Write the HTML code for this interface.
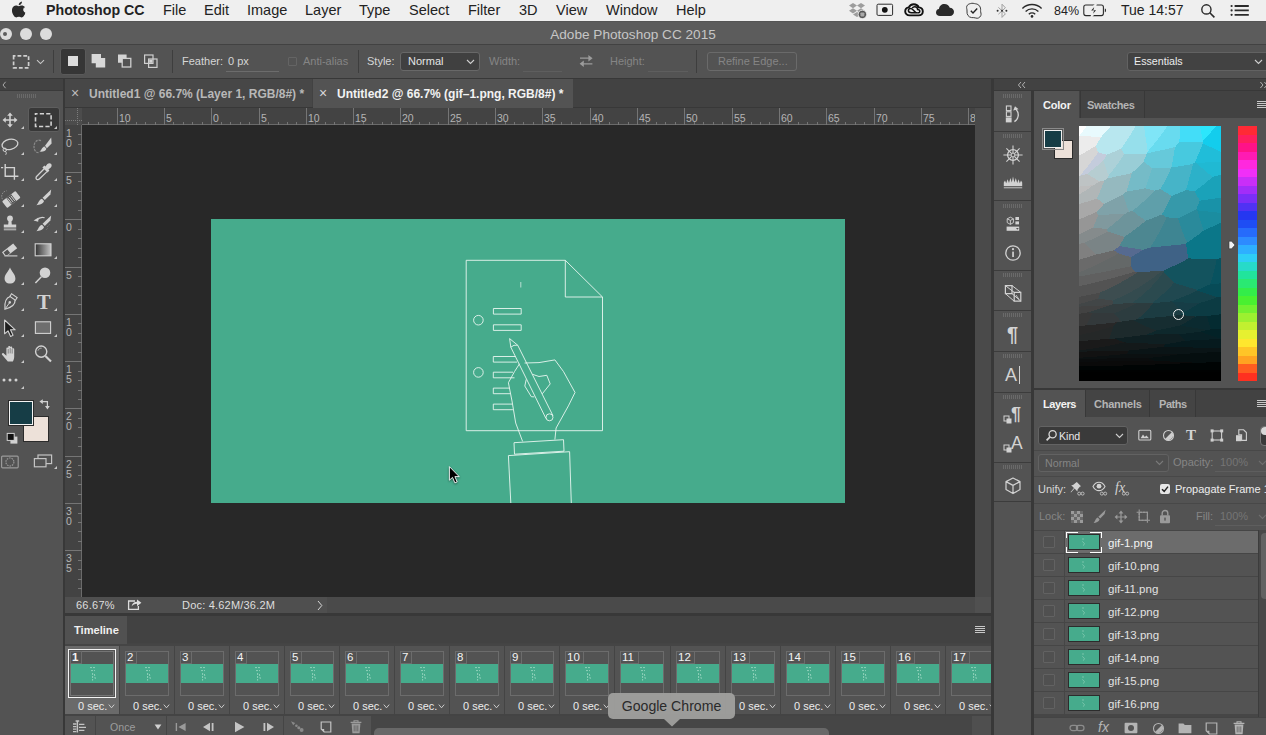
<!DOCTYPE html>
<html><head><meta charset="utf-8"><title>Adobe Photoshop CC 2015</title>
<style>
html,body{margin:0;padding:0}
body{width:1266px;height:735px;overflow:hidden;position:relative;background:#535353;font-family:"Liberation Sans",sans-serif;color:#ddd;font-size:11px}
.a{position:absolute;white-space:nowrap}
.b{position:absolute;box-sizing:border-box}
svg{position:absolute;overflow:visible}
.mi{position:absolute;top:1px;font-size:15px;color:#222;line-height:18px;white-space:nowrap}
.t11{font-size:11px;line-height:13px}
</style></head><body>
<div class="b" style="left:0;top:0;width:1266px;height:22px;background:#efefef;border-bottom:1px solid #555"></div>
<div class="mi" style="left:46px;font-weight:bold;font-size:14.2px;">Photoshop CC</div>
<div class="mi" style="left:163px;font-size:14.5px;">File</div>
<div class="mi" style="left:204px;font-size:14.5px;">Edit</div>
<div class="mi" style="left:247px;font-size:14.5px;">Image</div>
<div class="mi" style="left:305px;font-size:14.5px;">Layer</div>
<div class="mi" style="left:359px;font-size:14.5px;">Type</div>
<div class="mi" style="left:409px;font-size:14.5px;">Select</div>
<div class="mi" style="left:468px;font-size:14.5px;">Filter</div>
<div class="mi" style="left:519px;font-size:14.5px;">3D</div>
<div class="mi" style="left:556px;font-size:14.5px;">View</div>
<div class="mi" style="left:606px;font-size:14.5px;">Window</div>
<div class="mi" style="left:676px;font-size:14.5px;">Help</div>
<div class="mi" style="left:1054px;font-size:12.5px;top:2px">84%</div>
<div class="mi" style="left:1121px;font-size:14px">Tue 14:57</div>
<div class="b" style="left:0;top:22px;width:1266px;height:23px;background:#5c5c5c;border-bottom:1px solid #424242"></div>
<div class="a" style="left:0;width:1266px;text-align:center;top:27px;font-size:13.6px;line-height:16px;color:#c6c6c6">Adobe Photoshop CC 2015</div>
<div class="b" style="left:0px;top:28px;width:12px;height:12px;border-radius:6px;background:#dcdcdc"></div>
<div class="b" style="left:20px;top:28px;width:12px;height:12px;border-radius:6px;background:#dcdcdc"></div>
<div class="b" style="left:40px;top:28px;width:12px;height:12px;border-radius:6px;background:#dcdcdc"></div>
<div class="b" style="left:3px;top:32px;width:4px;height:4px;border-radius:2px;background:#5c5c5c"></div>
<div class="b" style="left:0;top:45px;width:1266px;height:34px;background:#535353;border-bottom:1px solid #383838"></div>
<div class="b" style="left:0;top:79px;width:1266px;height:656px;background:#383838"></div><svg style="left:12px;top:1px" width="15" height="17" viewBox="0 0 16 18"><path d="M10.6 0.4C10.7 1.5 10.3 2.5 9.7 3.2C9.1 3.9 8.1 4.5 7.2 4.4C7.1 3.4 7.6 2.4 8.1 1.8C8.8 1 9.8 0.5 10.6 0.4Z" fill="#2a2a2a"/><path d="M13.6 6.4C12.6 7 12 8 12 9.2C12 10.6 12.9 11.8 14.2 12.3C13.9 13.2 13.5 14 13 14.8C12.3 15.9 11.5 17 10.3 17C9.2 17 8.8 16.3 7.5 16.3C6.2 16.3 5.7 17 4.7 17C3.5 17 2.6 15.8 1.9 14.7C0.4 12.400 0.200 9.6 1.200 8C1.900 6.800 3.100 6.100 4.300 6.100C5.500 6.100 6.300 6.800 7.300 6.800C8.300 6.800 8.900 6.100 10.300 6.100C11.400 6.100 12.500 6.700 13.300 7.600" fill="#2a2a2a"/><path d="M13.6 6.4C12.8 5.400 11.600 4.800 10.500 4.800C9 4.800 8.300 5.500 7.300 5.500C6.200 5.500 5.400 4.800 4.100 4.800C2.900 4.800 1.500 5.600 0.700 6.900C-0.500 8.800 -0.300 12.300 1.600 15.200C2.300 16.200 3.200 17.400 4.400 17.400C5.500 17.400 5.800 16.700 7.300 16.700C8.800 16.700 9 17.400 10.100 17.400C11.300 17.400 12.300 16.100 13 15.100C13.500 14.300 13.700 13.900 14.100 13C11.100 11.900 10.600 7.700 13.600 6.400Z" fill="#2a2a2a"/></svg>
<svg style="left:848px;top:2px" width="20" height="18" viewBox="0 0 20 18"><path d="M5 1L9 3.6L5 6.200L1 3.600ZM13 1L17 3.600L13 6.200L9 3.600ZM5 6.200L9 8.800L5 11.400L1 8.800ZM13 6.200L17 8.800L13 11.400L9 8.800ZM5 12.400L9 9.900L13 12.400L9 15Z" fill="#9c9c9c"/><circle cx="14.4" cy="12.4" r="4.2" fill="#545454" stroke="#efefef" stroke-width="0.8"/><rect x="12.4" y="10.4" width="4" height="4" rx="0.8" fill="#a8a8a8"/></svg>
<svg style="left:876px;top:3px" width="18" height="14" viewBox="0 0 18 14"><rect x="1" y="1.2" width="15.6" height="11.2" rx="1.2" fill="none" stroke="#2a2a2a" stroke-width="1"/><circle cx="8.800" cy="6.800" r="2.900" fill="#111"/></svg>
<svg style="left:904px;top:3px" width="20" height="14" viewBox="0 0 20 14"><path d="M5.600 12.400C2.800 12.400 1.200 10.400 1.200 8.400C1.200 6.200 2.800 4.600 4.800 4.400C5.600 2.400 7.600 1.200 9.800 1.200C12.200 1.200 14 2.600 14.800 4.400C17.200 4.600 18.800 6.400 18.800 8.400C18.800 10.600 17.200 12.400 14.600 12.400Z" fill="none" stroke="#111" stroke-width="1.900"/><path d="M13.800 9.800H7.400C5.400 9.800 4.400 8.800 4.400 7.600C4.400 6.400 5.400 5.600 6.600 5.600C7.600 5.600 8.400 6.200 9.200 7L11.800 9.600" fill="none" stroke="#111" stroke-width="1.500"/><path d="M8.200 5.200C8.800 4.200 9.800 3.800 10.800 3.800C12.400 3.800 13.600 5 13.600 6.400C14.800 6.400 15.800 7.200 15.800 8.200C15.800 9.200 15 9.800 13.800 9.800" fill="none" stroke="#111" stroke-width="1.500"/></svg>
<svg style="left:935px;top:3px" width="20" height="14" viewBox="0 0 20 14"><path d="M5 13C2.600 13 1 11.400 1 9.400C1 7.600 2.200 6.200 4 6C4.200 3 6.600 1 9.400 1C12 1 14 2.600 14.800 4.800C17.200 4.800 19 6.600 19 8.800C19 11.200 17.200 13 15 13Z" fill="#2a2a2a"/></svg>
<svg style="left:965px;top:2px" width="18" height="18" viewBox="0 0 18 18"><path d="M5.400 1.600C7.400 0.800 9 1.600 10.600 1.800C14 2.200 16 5 15.600 8.600C15.400 10.200 16.600 11.800 15.800 13.600C14.800 15.800 12.600 16.800 10.800 16C9.400 15.400 8.200 15.800 6.600 15.600C3.400 15.200 1.600 12.400 2 9C2.200 7.400 1.200 6 1.800 4.200C2.400 2.600 3.800 2 5.400 1.600Z" fill="none" stroke="#3a3a3a" stroke-width="1"/><path d="M5.800 8.800L8 11L12.200 6.600" fill="none" stroke="#222" stroke-width="1.400"/></svg>
<svg style="left:996px;top:2px" width="12" height="18" viewBox="0 0 12 18"><path d="M2.400 5.400L9.400 11.800L6 15.400V2.200L9.400 5.800L2.400 12.200" fill="none" stroke="#a0a0a0" stroke-width="1"/><circle cx="1.600" cy="8.800" r="1" fill="#333"/><circle cx="6" cy="8.800" r="1" fill="#333"/><circle cx="10.400" cy="8.800" r="1" fill="#333"/></svg>
<svg style="left:1021px;top:3px" width="22" height="15" viewBox="0 0 22 15"><path d="M1.400 5.400C6.800 0.200 15.200 0.200 20.600 5.400" fill="none" stroke="#2a2a2a" stroke-width="1.400"/><path d="M4.600 8.400C8.200 5 13.800 5 17.400 8.400" fill="none" stroke="#2a2a2a" stroke-width="1.400"/><path d="M7.800 11.200C9.600 9.600 12.400 9.600 14.200 11.200" fill="none" stroke="#2a2a2a" stroke-width="1.400"/><circle cx="11" cy="13.400" r="1.300" fill="#2a2a2a"/></svg>
<svg style="left:1083px;top:4px" width="24" height="13" viewBox="0 0 24 13"><rect x="0.800" y="1" width="19.600" height="10.600" rx="2" fill="none" stroke="#2a2a2a" stroke-width="1.100"/><path d="M21.800 4.400V8.200C22.800 8 23 7.400 23 6.300C23 5.200 22.800 4.600 21.800 4.400Z" fill="#2a2a2a"/><path d="M13.200-0.400L6.400 7.200H10L8.200 13L15 5.400H11.400Z" fill="#2a2a2a" stroke="#efefef" stroke-width="1.600"/></svg>
<svg style="left:1200px;top:3px" width="16" height="16" viewBox="0 0 16 16"><circle cx="6.400" cy="6.400" r="4.600" fill="none" stroke="#2a2a2a" stroke-width="1.400"/><path d="M9.800 9.800L14.400 14.400" stroke="#2a2a2a" stroke-width="1.600"/></svg>
<svg style="left:1230px;top:4px" width="20" height="13" viewBox="0 0 20 13"><path d="M4.600 2H18.800M4.600 6.400H18.800M4.600 10.800H18.800" stroke="#2a2a2a" stroke-width="1.800"/><circle cx="1.600" cy="2" r="1.100" fill="#2a2a2a"/><circle cx="1.600" cy="6.400" r="1.100" fill="#2a2a2a"/><circle cx="1.600" cy="10.800" r="1.100" fill="#2a2a2a"/></svg><svg style="left:12px;top:54px" width="20" height="16" viewBox="0 0 20 16"><rect x="1.6" y="1.8" width="15" height="12" fill="none" stroke="#cfcfcf" stroke-width="1.7" stroke-dasharray="3.8 2" stroke-dashoffset="1.9"/></svg>
<svg style="left:36px;top:59px" width="9" height="6" viewBox="0 0 9 6"><path d="M1 1.2L4.5 4.6L8 1.2" fill="none" stroke="#c8c8c8" stroke-width="1.1"/></svg>
<div class="b" style="left:53px;top:50px;width:1px;height:23px;background:#3e3e3e"></div>
<div class="b" style="left:172px;top:50px;width:1px;height:23px;background:#3e3e3e"></div>
<div class="b" style="left:358px;top:50px;width:1px;height:23px;background:#3e3e3e"></div>
<div class="b" style="left:696px;top:50px;width:1px;height:23px;background:#3e3e3e"></div>
<div class="b" style="left:60px;top:48px;width:26px;height:27px;background:#363636;border:1px solid #5a5a5a;border-radius:3px"></div>
<div class="b" style="left:68px;top:56px;width:10px;height:10px;background:#dcdcdc"></div>
<svg style="left:91px;top:53px" width="16" height="16" viewBox="0 0 16 16"><path d="M0.6 1H10V5H14.2V14.4H4.8V10.2H0.6Z" fill="#d8d8d8"/></svg>
<svg style="left:117px;top:53px" width="16" height="16" viewBox="0 0 16 16"><rect x="5.2" y="5.4" width="8.6" height="8.6" fill="none" stroke="#cfcfcf" stroke-width="1.3"/><path d="M1 1.4H9.6V5.4H5.2V9.8H1Z" fill="#d4d4d4"/></svg>
<svg style="left:143px;top:53px" width="16" height="16" viewBox="0 0 16 16"><rect x="1.6" y="2" width="8.4" height="8.4" fill="none" stroke="#cfcfcf" stroke-width="1.2"/><rect x="5.6" y="6" width="8.4" height="8.4" fill="none" stroke="#cfcfcf" stroke-width="1.2"/><rect x="6.2" y="6.6" width="3.2" height="3.2" fill="#d4d4d4"/></svg>
<div class="a" style="left:182px;top:55px;font-size:11px;line-height:13px;color:#d6d6d6;">Feather:</div>
<div class="a" style="left:228px;top:55px;font-size:11px;line-height:13px;color:#d6d6d6;">0 px</div>
<div class="b" style="left:226px;top:71px;width:53px;height:1px;background:#6c6c6c"></div>
<div class="b" style="left:288px;top:57px;width:9px;height:9px;border:1px solid #646464;border-radius:1px"></div>
<div class="a" style="left:303px;top:55px;font-size:11px;line-height:13px;color:#858585;">Anti-alias</div>
<div class="a" style="left:367px;top:55px;font-size:11px;line-height:13px;color:#d6d6d6;">Style:</div>
<div class="b" style="left:400px;top:52px;width:80px;height:19px;background:#404040;border:1px solid #686868;border-radius:3px"></div>
<div class="a" style="left:408px;top:55px;font-size:11px;line-height:13px;color:#e4e4e4;">Normal</div>
<svg style="left:466px;top:59px" width="9" height="6" viewBox="0 0 9 6"><path d="M1 1L4.5 4.4L8 1" fill="none" stroke="#cfcfcf" stroke-width="1.1"/></svg>
<div class="a" style="left:489px;top:55px;font-size:11px;line-height:13px;color:#858585;">Width:</div>
<div class="b" style="left:523px;top:71px;width:39px;height:1px;background:#5e5e5e"></div>
<svg style="left:578px;top:54px" width="16" height="14" viewBox="0 0 16 14"><path d="M2 4.2H11.4M14.4 9.8H4.8" stroke="#9c9c9c" stroke-width="1.3" fill="none"/><path d="M10.4 1L14.6 4.2L10.4 7.4Z M5.8 6.6L1.6 9.8L5.8 13Z" fill="#9c9c9c"/></svg>
<div class="a" style="left:610px;top:55px;font-size:11px;line-height:13px;color:#858585;">Height:</div>
<div class="b" style="left:648px;top:71px;width:40px;height:1px;background:#5e5e5e"></div>
<div class="b" style="left:707px;top:52px;width:90px;height:19px;border:1px solid #6a6a6a;border-radius:3px"></div>
<div class="a" style="left:718px;top:55px;font-size:11px;line-height:13px;color:#858585;">Refine Edge...</div>
<div class="b" style="left:1127px;top:52px;width:150px;height:19px;background:#424242;border:1px solid #626262;border-radius:3px"></div>
<div class="a" style="left:1134px;top:55px;font-size:11px;line-height:13px;color:#ececec;font-size:10.7px">Essentials</div>
<svg style="left:1254px;top:59px" width="9" height="6" viewBox="0 0 9 6"><path d="M1 1L4.5 4.4L8 1" fill="none" stroke="#cfcfcf" stroke-width="1.1"/></svg><div class="b" style="left:0;top:79px;width:63px;height:656px;background:#535353"></div>
<div class="b" style="left:0;top:79px;width:63px;height:12px;background:#424242;border-bottom:1px solid #3a3a3a"></div>
<svg style="left:2px;top:81px" width="5" height="8" viewBox="0 0 5 8"><path d="M3.6 0.8L1 4L3.6 7.2" stroke="#b5b5b5" stroke-width="0.9" fill="none"/></svg>
<svg style="left:17px;top:94px" width="20" height="4" shape-rendering="crispEdges"><rect x="0" y="0" width="1" height="4" fill="#6a6a6a"/><rect x="2" y="0" width="1" height="4" fill="#6a6a6a"/><rect x="4" y="0" width="1" height="4" fill="#6a6a6a"/><rect x="6" y="0" width="1" height="4" fill="#6a6a6a"/><rect x="8" y="0" width="1" height="4" fill="#6a6a6a"/><rect x="10" y="0" width="1" height="4" fill="#6a6a6a"/><rect x="12" y="0" width="1" height="4" fill="#6a6a6a"/><rect x="14" y="0" width="1" height="4" fill="#6a6a6a"/><rect x="16" y="0" width="1" height="4" fill="#6a6a6a"/><rect x="18" y="0" width="1" height="4" fill="#6a6a6a"/></svg>
<div class="b" style="left:28px;top:107px;width:32px;height:25px;background:#383838;border:1px solid #5e5e5e;border-radius:3px"></div>
<svg style="left:-2px;top:108px" width="24" height="24" viewBox="-12 -12 24 24" fill="none" stroke="none"><path transform="scale(.88)" d="M0-8.5L3.2-4.8H0.9V-0.9H4.8V-3.2L8.5 0L4.8 3.2V0.9H0.9V4.8H3.2L0 8.5L-3.2 4.8H-0.9V0.9H-4.8V3.2L-8.5 0L-4.8-3.2V-0.9H-0.9V-4.8H-3.2Z" fill="#d2d2d2"/></svg><svg style="left:21px;top:126px" width="3" height="3" viewBox="0 0 3 3"><path d="M3 0V3H0Z" fill="#c8c8c8"/></svg>
<svg style="left:31px;top:108px" width="24" height="24" viewBox="-12 -12 24 24" fill="none" stroke="none"><rect x="-7.5" y="-6.3" width="15.6" height="12.8" stroke="#d2d2d2" stroke-width="1.6" stroke-dasharray="4.2 2.2" stroke-dashoffset="2.1"/></svg><svg style="left:54px;top:126px" width="3" height="3" viewBox="0 0 3 3"><path d="M3 0V3H0Z" fill="#c8c8c8"/></svg>
<svg style="left:-2px;top:134px" width="24" height="24" viewBox="-12 -12 24 24" fill="none" stroke="none"><ellipse cx="0.3" cy="-1.6" rx="8" ry="5" transform="rotate(-12)" stroke="#d2d2d2" stroke-width="1.3"/><circle cx="-5.2" cy="3.8" r="1.7" stroke="#d2d2d2" stroke-width="1"/><path d="M-4.6 5.2C-3.4 6.6-3.6 8-4.4 8.8" stroke="#d2d2d2" stroke-width="1"/></svg><svg style="left:21px;top:152px" width="3" height="3" viewBox="0 0 3 3"><path d="M3 0V3H0Z" fill="#c8c8c8"/></svg>
<svg style="left:31px;top:134px" width="24" height="24" viewBox="-12 -12 24 24" fill="none" stroke="none"><path d="M-2-5.4C-6.6-7.2-9 -3-9 0.6C-9 4.6-6.8 7.2-3.4 6.4" stroke="#8a8a8a" stroke-width="1.2" stroke-dasharray="2.4 1"/><path d="M8.2-8.4L8.6-2.4L3.9 2.2L2-0.2Z" fill="#d2d2d2"/><path d="M1.6 0.6L3.4 2.8C3 5-0.6 6.2-3.6 5.6C-1.4 4.6-1.2 1.2 1.6 0.6Z" fill="#d2d2d2"/></svg><svg style="left:54px;top:152px" width="3" height="3" viewBox="0 0 3 3"><path d="M3 0V3H0Z" fill="#c8c8c8"/></svg>
<svg style="left:-2px;top:160px" width="24" height="24" viewBox="-12 -12 24 24" fill="none" stroke="none"><path d="M-4.8-8V4.2H8.4M-9-4.4H-6.800M-4.8-4.400H4.400V7.800" stroke="#d2d2d2" stroke-width="1.4"/><rect x="-5.2" y="-4.7" width="9.9" height="9.3" fill="#535353" stroke="none" opacity="0"/></svg><svg style="left:21px;top:178px" width="3" height="3" viewBox="0 0 3 3"><path d="M3 0V3H0Z" fill="#c8c8c8"/></svg>
<svg style="left:31px;top:160px" width="24" height="24" viewBox="-12 -12 24 24" fill="none" stroke="none"><path d="M1.2-3.2L-6.2 4.2C-7.4 5.4-7 6.6-6.4 7.2C-5.6 7.8-4.4 7.8-3.4 6.8L4 -0.4" stroke="#d2d2d2" stroke-width="1.3"/><path d="M-0.6-4.6L1.4-6.4L2.4-5.4L4.4-8C5.6-9.2 7.2-9 8-8.2C8.8-7.4 9-5.8 7.8-4.6L5.4-2.6L6.4-1.6L4.6 0.4Z" fill="#d2d2d2"/></svg><svg style="left:54px;top:178px" width="3" height="3" viewBox="0 0 3 3"><path d="M3 0V3H0Z" fill="#c8c8c8"/></svg>
<svg style="left:-2px;top:186px" width="24" height="24" viewBox="-12 -12 24 24" fill="none" stroke="none"><g transform="rotate(-38)"><rect x="-8.4" y="-2.2" width="17" height="8.4" rx="1" fill="#d2d2d2"/><rect x="-3" y="-2.2" width="6.2" height="8.4" fill="#535353"/><path d="M-2 -1.2V5.2M0 -1.2V5.2M2 -1.2V5.2" stroke="#d2d2d2" stroke-width="0.9"/></g><path d="M-7.6 1.2C-9.4-2.4-7.6-6.6-3.4-7.2" stroke="#8a8a8a" stroke-width="1" stroke-dasharray="1.6 1"/></svg><svg style="left:21px;top:204px" width="3" height="3" viewBox="0 0 3 3"><path d="M3 0V3H0Z" fill="#c8c8c8"/></svg>
<svg style="left:31px;top:186px" width="24" height="24" viewBox="-12 -12 24 24" fill="none" stroke="none"><path d="M8.2-8.6L7.4-3.6L1.8 2L-0.4-0.2Z" fill="#d2d2d2"/><path d="M-1 0.8L1 3C0.4 5.6-3.4 7-6.6 7.2C-4.4 5.4-4.2 1.6-1 0.8Z" fill="#d2d2d2"/></svg><svg style="left:54px;top:204px" width="3" height="3" viewBox="0 0 3 3"><path d="M3 0V3H0Z" fill="#c8c8c8"/></svg>
<svg style="left:-2px;top:212px" width="24" height="24" viewBox="-12 -12 24 24" fill="none" stroke="none"><circle cx="0" cy="-5.6" r="2.9" fill="#d2d2d2"/><path d="M-1.4-3.4H1.4L1.8 0.4H6.2V3.4H-6.2V0.4H-1.8Z" fill="#d2d2d2"/><rect x="-6.2" y="4.4" width="12.4" height="2" fill="#a8a8a8"/></svg><svg style="left:21px;top:230px" width="3" height="3" viewBox="0 0 3 3"><path d="M3 0V3H0Z" fill="#c8c8c8"/></svg>
<svg style="left:31px;top:212px" width="24" height="24" viewBox="-12 -12 24 24" fill="none" stroke="none"><path d="M8.2-8.6L7.4-3.6L1.8 2L-0.4-0.2Z" fill="#d2d2d2"/><path d="M-1 0.8L1 3C0.4 5.6-3.4 7-6.6 7.2C-4.4 5.4-4.2 1.6-1 0.8Z" fill="#d2d2d2"/><path d="M-6.4-3.6C-4-6.4-0.6-7 1.6-6.2" stroke="#d2d2d2" stroke-width="1.2"/><path d="M-9.4-3.4L-4.6-6.6L-4.8-2.2Z" fill="#d2d2d2"/><path d="M4.4 2.6L6.4 0.6M3.6 5.4L5 4" stroke="#9a9a9a" stroke-width="0.8" stroke-dasharray="1 1"/></svg><svg style="left:54px;top:230px" width="3" height="3" viewBox="0 0 3 3"><path d="M3 0V3H0Z" fill="#c8c8c8"/></svg>
<svg style="left:-2px;top:238px" width="24" height="24" viewBox="-12 -12 24 24" fill="none" stroke="none"><path d="M-8 2.2L3.2-6.6L7.2-1.8L-2.2 5.6H-5.6Z" fill="#d2d2d2"/><path d="M-6.4 2.4L-2.6-0.6L0.2 2.9L-2.6 5H-4.6Z" fill="#535353"/><path d="M-5.6 5.9H7.4" stroke="#d2d2d2" stroke-width="1.1"/></svg><svg style="left:21px;top:256px" width="3" height="3" viewBox="0 0 3 3"><path d="M3 0V3H0Z" fill="#c8c8c8"/></svg>
<svg style="left:31px;top:238px" width="24" height="24" viewBox="-12 -12 24 24" fill="none" stroke="none"><defs><linearGradient id="gt" x1="0" x2="1" y1="0" y2="0"><stop offset="0" stop-color="#333"/><stop offset="1" stop-color="#c4c4c4"/></linearGradient></defs><rect x="-7.8" y="-6.2" width="15.8" height="12" fill="url(#gt)" stroke="#d2d2d2" stroke-width="1.1"/></svg><svg style="left:54px;top:256px" width="3" height="3" viewBox="0 0 3 3"><path d="M3 0V3H0Z" fill="#c8c8c8"/></svg>
<svg style="left:-2px;top:264px" width="24" height="24" viewBox="-12 -12 24 24" fill="none" stroke="none"><path d="M0-8.4C1.6-4.4 5.4-1.4 5.4 2.4C5.4 5.6 3 7.6 0 7.6C-3 7.6-5.4 5.6-5.4 2.4C-5.4-1.4-1.6-4.4 0-8.4Z" fill="#d2d2d2"/></svg><svg style="left:21px;top:282px" width="3" height="3" viewBox="0 0 3 3"><path d="M3 0V3H0Z" fill="#c8c8c8"/></svg>
<svg style="left:31px;top:264px" width="24" height="24" viewBox="-12 -12 24 24" fill="none" stroke="none"><circle cx="2" cy="-3.2" r="5.3" fill="#d2d2d2"/><path d="M-1.6 0.8L-7.6 7" stroke="#d2d2d2" stroke-width="1.5"/></svg><svg style="left:54px;top:282px" width="3" height="3" viewBox="0 0 3 3"><path d="M3 0V3H0Z" fill="#c8c8c8"/></svg>
<svg style="left:-2px;top:290px" width="24" height="24" viewBox="-12 -12 24 24" fill="none" stroke="none"><g transform="rotate(35)"><path d="M-3.4-7.6H3.4V-4.6H-3.4Z" stroke="#d2d2d2" stroke-width="1.1"/><path d="M-3-4.6C-5.4-1.6-5.4 2.4 0 8.8C5.4 2.4 5.4-1.6 3-4.6" stroke="#d2d2d2" stroke-width="1.2"/><path d="M0 8V1.4" stroke="#d2d2d2" stroke-width="0.9"/><circle cx="0" cy="0.4" r="1.3" fill="#d2d2d2"/></g></svg><svg style="left:21px;top:308px" width="3" height="3" viewBox="0 0 3 3"><path d="M3 0V3H0Z" fill="#c8c8c8"/></svg>
<div class="a" style="left:37px;top:291px;font-family:'Liberation Serif',serif;font-size:20.5px;line-height:22px;color:#d2d2d2;font-weight:bold">T</div>
<svg style="left:31px;top:290px" width="24" height="24" viewBox="-12 -12 24 24" fill="none" stroke="none"></svg><svg style="left:54px;top:308px" width="3" height="3" viewBox="0 0 3 3"><path d="M3 0V3H0Z" fill="#c8c8c8"/></svg>
<svg style="left:-2px;top:316px" width="24" height="24" viewBox="-12 -12 24 24" fill="none" stroke="none"><path d="M-5.4-8V5.8L-2 2.8L0.6 8.4L3 7.3L0.5 1.8H5.2Z" fill="#1e1e1e" stroke="#d2d2d2" stroke-width="1.1" stroke-linejoin="round"/></svg><svg style="left:21px;top:334px" width="3" height="3" viewBox="0 0 3 3"><path d="M3 0V3H0Z" fill="#c8c8c8"/></svg>
<svg style="left:31px;top:316px" width="24" height="24" viewBox="-12 -12 24 24" fill="none" stroke="none"><rect x="-7.6" y="-6.2" width="15.2" height="11.6" fill="#6e6e6e" stroke="#d2d2d2" stroke-width="1.1"/></svg><svg style="left:54px;top:334px" width="3" height="3" viewBox="0 0 3 3"><path d="M3 0V3H0Z" fill="#c8c8c8"/></svg>
<svg style="left:-2px;top:342px" width="24" height="24" viewBox="-12 -12 24 24" fill="none" stroke="none"><path d="M-2.2 7.6C-4.4 5-6.6 2.4-8 0.8C-8.6-0.4-7.2-1.4-6.2-0.6L-3.6 1.8V-5.4C-3.6-6.8-1.8-6.8-1.8-5.4V-7C-1.8-8.4 0.2-8.4 0.2-7V-6.4C0.2-7.8 2.2-7.8 2.2-6.4V-4.8C2.2-6.2 4.2-6.2 4.2-4.8V2.4C4.2 4.6 3.6 6 2.8 7.6Z" fill="#d2d2d2"/><path d="M-1.8-5V-0.4M0.2-6V-0.6M2.2-5V-0.4" stroke="#535353" stroke-width="0.6"/></svg><svg style="left:21px;top:360px" width="3" height="3" viewBox="0 0 3 3"><path d="M3 0V3H0Z" fill="#c8c8c8"/></svg>
<svg style="left:31px;top:342px" width="24" height="24" viewBox="-12 -12 24 24" fill="none" stroke="none"><circle cx="-1.8" cy="-2.4" r="5.6" stroke="#d2d2d2" stroke-width="1.4"/><path d="M2.4 2L8 7.6" stroke="#d2d2d2" stroke-width="2.1"/><path d="M-5-3.4C-4.4-5.2-2.8-6-1.4-5.8" stroke="#d2d2d2" stroke-width="0.8"/></svg>
<svg style="left:-2px;top:368px" width="24" height="24" viewBox="-12 -12 24 24" fill="none" stroke="none"><circle cx="-6" cy="0" r="1.5" fill="#d2d2d2"/><circle cx="0" cy="0" r="1.5" fill="#d2d2d2"/><circle cx="6" cy="0" r="1.5" fill="#d2d2d2"/></svg><svg style="left:21px;top:386px" width="3" height="3" viewBox="0 0 3 3"><path d="M3 0V3H0Z" fill="#c8c8c8"/></svg>
<div class="b" style="left:23px;top:416px;width:26px;height:26px;background:#ede1d9;border:1px solid #2b2b2b"></div>
<div class="b" style="left:8px;top:400px;width:26px;height:26px;background:#163d46;border:1px solid #2b2b2b;box-shadow:inset 0 0 0 1px #f4f4f4"></div>
<svg style="left:39px;top:398px" width="12" height="12" viewBox="0 0 12 12"><path d="M2.6 3.6H8.4V9" stroke="#d2d2d2" stroke-width="1.2" fill="none"/><path d="M0.4 3.6L3.8 1.2V6Z M8.4 11.4L6 8H10.8Z" fill="#d2d2d2"/></svg>
<svg style="left:6px;top:432px" width="13" height="13" viewBox="0 0 13 13"><rect x="4.4" y="4.6" width="7" height="7" fill="#d2d2d2"/><rect x="1.2" y="1.4" width="7" height="7" fill="#111" stroke="#d2d2d2" stroke-width="1"/></svg>
<svg style="left:0px;top:454px" width="22" height="16" viewBox="0 0 22 16"><rect x="1.6" y="2.2" width="16.6" height="11.6" rx="1" stroke="#9a9a9a" stroke-width="1.2" fill="none"/><circle cx="9.9" cy="8" r="4" stroke="#9a9a9a" stroke-width="1.1" stroke-dasharray="1.6 0.9" fill="none"/></svg>
<svg style="left:33px;top:453px" width="22" height="16" viewBox="0 0 22 16"><rect x="5" y="2" width="13.6" height="8.6" stroke="#c4c4c4" stroke-width="1.2" fill="#535353"/><rect x="1.4" y="5.6" width="11.6" height="8.2" stroke="#c4c4c4" stroke-width="1.2" fill="#535353"/></svg>
<svg style="left:54px;top:466px" width="3" height="3" viewBox="0 0 3 3"><path d="M3 0V3H0Z" fill="#c8c8c8"/></svg><div class="b" style="left:65px;top:79px;width:926px;height:28px;background:#424242"></div>
<div class="b" style="left:65px;top:79px;width:247px;height:28px;background:#474747"></div>
<div class="b" style="left:313px;top:79px;width:260px;height:29px;background:#535353"></div>
<div class="a" style="left:71px;top:86px;font-size:14px;line-height:14px;color:#bdbdbd">×</div>
<div class="a" style="left:89px;top:87px;font-size:12px;line-height:14px;font-weight:bold;color:#b8b8b8">Untitled1 @ 66.7% (Layer 1, RGB/8#) *</div>
<div class="a" style="left:319px;top:86px;font-size:14px;line-height:14px;color:#d8d8d8">×</div>
<div class="a" style="left:337px;top:87px;font-size:12px;line-height:14px;font-weight:bold;color:#f2f2f2">Untitled2 @ 66.7% (gif–1.png, RGB/8#) *</div>
<div class="b" style="left:65px;top:108px;width:910px;height:17px;background:#434343;border-bottom:1px solid #6a6a6a"></div>
<div class="b" style="left:65px;top:125px;width:17px;height:472px;background:#434343;border-right:1px solid #6a6a6a"></div>
<div class="b" style="left:65px;top:108px;width:17px;height:17px;background:#4c4c4c"></div>
<div class="b" style="left:975px;top:108px;width:16px;height:489px;background:#4a4a4a"></div>
<div class="b" style="left:65px;top:597px;width:926px;height:16px;background:#4a4a4a"></div>
<div class="b" style="left:975px;top:597px;width:16px;height:16px;background:#505050"></div>
<div class="b" style="left:82px;top:125px;width:893px;height:472px;background:#282828"></div>
<svg style="left:0;top:0" width="1266" height="735" shape-rendering="crispEdges"><rect x="88" y="122" width="1" height="3" fill="#757575"/><rect x="98" y="122" width="1" height="3" fill="#757575"/><rect x="107" y="122" width="1" height="3" fill="#757575"/><rect x="117" y="108" width="1" height="17" fill="#757575"/><rect x="126" y="122" width="1" height="3" fill="#757575"/><rect x="136" y="122" width="1" height="3" fill="#757575"/><rect x="145" y="122" width="1" height="3" fill="#757575"/><rect x="155" y="122" width="1" height="3" fill="#757575"/><rect x="164" y="108" width="1" height="17" fill="#757575"/><rect x="173" y="122" width="1" height="3" fill="#757575"/><rect x="183" y="122" width="1" height="3" fill="#757575"/><rect x="192" y="122" width="1" height="3" fill="#757575"/><rect x="202" y="122" width="1" height="3" fill="#757575"/><rect x="211" y="108" width="1" height="17" fill="#757575"/><rect x="221" y="122" width="1" height="3" fill="#757575"/><rect x="230" y="122" width="1" height="3" fill="#757575"/><rect x="240" y="122" width="1" height="3" fill="#757575"/><rect x="249" y="122" width="1" height="3" fill="#757575"/><rect x="259" y="108" width="1" height="17" fill="#757575"/><rect x="268" y="122" width="1" height="3" fill="#757575"/><rect x="278" y="122" width="1" height="3" fill="#757575"/><rect x="287" y="122" width="1" height="3" fill="#757575"/><rect x="296" y="122" width="1" height="3" fill="#757575"/><rect x="306" y="108" width="1" height="17" fill="#757575"/><rect x="315" y="122" width="1" height="3" fill="#757575"/><rect x="325" y="122" width="1" height="3" fill="#757575"/><rect x="334" y="122" width="1" height="3" fill="#757575"/><rect x="344" y="122" width="1" height="3" fill="#757575"/><rect x="353" y="108" width="1" height="17" fill="#757575"/><rect x="363" y="122" width="1" height="3" fill="#757575"/><rect x="372" y="122" width="1" height="3" fill="#757575"/><rect x="382" y="122" width="1" height="3" fill="#757575"/><rect x="391" y="122" width="1" height="3" fill="#757575"/><rect x="400" y="108" width="1" height="17" fill="#757575"/><rect x="410" y="122" width="1" height="3" fill="#757575"/><rect x="419" y="122" width="1" height="3" fill="#757575"/><rect x="429" y="122" width="1" height="3" fill="#757575"/><rect x="438" y="122" width="1" height="3" fill="#757575"/><rect x="448" y="108" width="1" height="17" fill="#757575"/><rect x="457" y="122" width="1" height="3" fill="#757575"/><rect x="467" y="122" width="1" height="3" fill="#757575"/><rect x="476" y="122" width="1" height="3" fill="#757575"/><rect x="486" y="122" width="1" height="3" fill="#757575"/><rect x="495" y="108" width="1" height="17" fill="#757575"/><rect x="505" y="122" width="1" height="3" fill="#757575"/><rect x="514" y="122" width="1" height="3" fill="#757575"/><rect x="523" y="122" width="1" height="3" fill="#757575"/><rect x="533" y="122" width="1" height="3" fill="#757575"/><rect x="542" y="108" width="1" height="17" fill="#757575"/><rect x="552" y="122" width="1" height="3" fill="#757575"/><rect x="561" y="122" width="1" height="3" fill="#757575"/><rect x="571" y="122" width="1" height="3" fill="#757575"/><rect x="580" y="122" width="1" height="3" fill="#757575"/><rect x="590" y="108" width="1" height="17" fill="#757575"/><rect x="599" y="122" width="1" height="3" fill="#757575"/><rect x="609" y="122" width="1" height="3" fill="#757575"/><rect x="618" y="122" width="1" height="3" fill="#757575"/><rect x="628" y="122" width="1" height="3" fill="#757575"/><rect x="637" y="108" width="1" height="17" fill="#757575"/><rect x="646" y="122" width="1" height="3" fill="#757575"/><rect x="656" y="122" width="1" height="3" fill="#757575"/><rect x="665" y="122" width="1" height="3" fill="#757575"/><rect x="675" y="122" width="1" height="3" fill="#757575"/><rect x="684" y="108" width="1" height="17" fill="#757575"/><rect x="694" y="122" width="1" height="3" fill="#757575"/><rect x="703" y="122" width="1" height="3" fill="#757575"/><rect x="713" y="122" width="1" height="3" fill="#757575"/><rect x="722" y="122" width="1" height="3" fill="#757575"/><rect x="732" y="108" width="1" height="17" fill="#757575"/><rect x="741" y="122" width="1" height="3" fill="#757575"/><rect x="751" y="122" width="1" height="3" fill="#757575"/><rect x="760" y="122" width="1" height="3" fill="#757575"/><rect x="769" y="122" width="1" height="3" fill="#757575"/><rect x="779" y="108" width="1" height="17" fill="#757575"/><rect x="788" y="122" width="1" height="3" fill="#757575"/><rect x="798" y="122" width="1" height="3" fill="#757575"/><rect x="807" y="122" width="1" height="3" fill="#757575"/><rect x="817" y="122" width="1" height="3" fill="#757575"/><rect x="826" y="108" width="1" height="17" fill="#757575"/><rect x="836" y="122" width="1" height="3" fill="#757575"/><rect x="845" y="122" width="1" height="3" fill="#757575"/><rect x="855" y="122" width="1" height="3" fill="#757575"/><rect x="864" y="122" width="1" height="3" fill="#757575"/><rect x="874" y="108" width="1" height="17" fill="#757575"/><rect x="883" y="122" width="1" height="3" fill="#757575"/><rect x="892" y="122" width="1" height="3" fill="#757575"/><rect x="902" y="122" width="1" height="3" fill="#757575"/><rect x="911" y="122" width="1" height="3" fill="#757575"/><rect x="921" y="108" width="1" height="17" fill="#757575"/><rect x="930" y="122" width="1" height="3" fill="#757575"/><rect x="940" y="122" width="1" height="3" fill="#757575"/><rect x="949" y="122" width="1" height="3" fill="#757575"/><rect x="959" y="122" width="1" height="3" fill="#757575"/><rect x="968" y="108" width="1" height="17" fill="#757575"/><rect x="78" y="134" width="4" height="1" fill="#757575"/><rect x="78" y="144" width="4" height="1" fill="#757575"/><rect x="78" y="153" width="4" height="1" fill="#757575"/><rect x="78" y="163" width="4" height="1" fill="#757575"/><rect x="65" y="172" width="17" height="1" fill="#757575"/><rect x="78" y="181" width="4" height="1" fill="#757575"/><rect x="78" y="191" width="4" height="1" fill="#757575"/><rect x="78" y="200" width="4" height="1" fill="#757575"/><rect x="78" y="210" width="4" height="1" fill="#757575"/><rect x="65" y="219" width="17" height="1" fill="#757575"/><rect x="78" y="229" width="4" height="1" fill="#757575"/><rect x="78" y="238" width="4" height="1" fill="#757575"/><rect x="78" y="248" width="4" height="1" fill="#757575"/><rect x="78" y="257" width="4" height="1" fill="#757575"/><rect x="65" y="267" width="17" height="1" fill="#757575"/><rect x="78" y="276" width="4" height="1" fill="#757575"/><rect x="78" y="286" width="4" height="1" fill="#757575"/><rect x="78" y="295" width="4" height="1" fill="#757575"/><rect x="78" y="304" width="4" height="1" fill="#757575"/><rect x="65" y="314" width="17" height="1" fill="#757575"/><rect x="78" y="323" width="4" height="1" fill="#757575"/><rect x="78" y="333" width="4" height="1" fill="#757575"/><rect x="78" y="342" width="4" height="1" fill="#757575"/><rect x="78" y="352" width="4" height="1" fill="#757575"/><rect x="65" y="361" width="17" height="1" fill="#757575"/><rect x="78" y="371" width="4" height="1" fill="#757575"/><rect x="78" y="380" width="4" height="1" fill="#757575"/><rect x="78" y="390" width="4" height="1" fill="#757575"/><rect x="78" y="399" width="4" height="1" fill="#757575"/><rect x="65" y="408" width="17" height="1" fill="#757575"/><rect x="78" y="418" width="4" height="1" fill="#757575"/><rect x="78" y="427" width="4" height="1" fill="#757575"/><rect x="78" y="437" width="4" height="1" fill="#757575"/><rect x="78" y="446" width="4" height="1" fill="#757575"/><rect x="65" y="456" width="17" height="1" fill="#757575"/><rect x="78" y="465" width="4" height="1" fill="#757575"/><rect x="78" y="475" width="4" height="1" fill="#757575"/><rect x="78" y="484" width="4" height="1" fill="#757575"/><rect x="78" y="494" width="4" height="1" fill="#757575"/><rect x="65" y="503" width="17" height="1" fill="#757575"/><rect x="78" y="513" width="4" height="1" fill="#757575"/><rect x="78" y="522" width="4" height="1" fill="#757575"/><rect x="78" y="531" width="4" height="1" fill="#757575"/><rect x="78" y="541" width="4" height="1" fill="#757575"/><rect x="65" y="550" width="17" height="1" fill="#757575"/><rect x="78" y="560" width="4" height="1" fill="#757575"/><rect x="78" y="569" width="4" height="1" fill="#757575"/><rect x="78" y="579" width="4" height="1" fill="#757575"/><rect x="78" y="588" width="4" height="1" fill="#757575"/></svg>
<div class="a" style="left:119px;top:112px;font-size:10.5px;line-height:12px;color:#b4b4b4;">10</div>
<div class="a" style="left:166px;top:112px;font-size:10.5px;line-height:12px;color:#b4b4b4;">5</div>
<div class="a" style="left:213px;top:112px;font-size:10.5px;line-height:12px;color:#b4b4b4;">0</div>
<div class="a" style="left:261px;top:112px;font-size:10.5px;line-height:12px;color:#b4b4b4;">5</div>
<div class="a" style="left:308px;top:112px;font-size:10.5px;line-height:12px;color:#b4b4b4;">10</div>
<div class="a" style="left:355px;top:112px;font-size:10.5px;line-height:12px;color:#b4b4b4;">15</div>
<div class="a" style="left:402px;top:112px;font-size:10.5px;line-height:12px;color:#b4b4b4;">20</div>
<div class="a" style="left:450px;top:112px;font-size:10.5px;line-height:12px;color:#b4b4b4;">25</div>
<div class="a" style="left:497px;top:112px;font-size:10.5px;line-height:12px;color:#b4b4b4;">30</div>
<div class="a" style="left:544px;top:112px;font-size:10.5px;line-height:12px;color:#b4b4b4;">35</div>
<div class="a" style="left:592px;top:112px;font-size:10.5px;line-height:12px;color:#b4b4b4;">40</div>
<div class="a" style="left:639px;top:112px;font-size:10.5px;line-height:12px;color:#b4b4b4;">45</div>
<div class="a" style="left:686px;top:112px;font-size:10.5px;line-height:12px;color:#b4b4b4;">50</div>
<div class="a" style="left:734px;top:112px;font-size:10.5px;line-height:12px;color:#b4b4b4;">55</div>
<div class="a" style="left:781px;top:112px;font-size:10.5px;line-height:12px;color:#b4b4b4;">60</div>
<div class="a" style="left:828px;top:112px;font-size:10.5px;line-height:12px;color:#b4b4b4;">65</div>
<div class="a" style="left:876px;top:112px;font-size:10.5px;line-height:12px;color:#b4b4b4;">70</div>
<div class="a" style="left:923px;top:112px;font-size:10.5px;line-height:12px;color:#b4b4b4;">75</div>
<div class="a" style="left:970px;top:112px;font-size:10.5px;line-height:12px;color:#b4b4b4;width:5px;overflow:hidden;">8</div>
<div class="a" style="left:66px;top:128px;font-size:10.5px;line-height:10px;color:#b4b4b4">1</div>
<div class="a" style="left:66px;top:138px;font-size:10.5px;line-height:10px;color:#b4b4b4">0</div>
<div class="a" style="left:66px;top:175px;font-size:10.5px;line-height:10px;color:#b4b4b4">5</div>
<div class="a" style="left:66px;top:222px;font-size:10.5px;line-height:10px;color:#b4b4b4">0</div>
<div class="a" style="left:66px;top:270px;font-size:10.5px;line-height:10px;color:#b4b4b4">5</div>
<div class="a" style="left:66px;top:317px;font-size:10.5px;line-height:10px;color:#b4b4b4">1</div>
<div class="a" style="left:66px;top:327px;font-size:10.5px;line-height:10px;color:#b4b4b4">0</div>
<div class="a" style="left:66px;top:364px;font-size:10.5px;line-height:10px;color:#b4b4b4">1</div>
<div class="a" style="left:66px;top:374px;font-size:10.5px;line-height:10px;color:#b4b4b4">5</div>
<div class="a" style="left:66px;top:411px;font-size:10.5px;line-height:10px;color:#b4b4b4">2</div>
<div class="a" style="left:66px;top:421px;font-size:10.5px;line-height:10px;color:#b4b4b4">0</div>
<div class="a" style="left:66px;top:459px;font-size:10.5px;line-height:10px;color:#b4b4b4">2</div>
<div class="a" style="left:66px;top:469px;font-size:10.5px;line-height:10px;color:#b4b4b4">5</div>
<div class="a" style="left:66px;top:506px;font-size:10.5px;line-height:10px;color:#b4b4b4">3</div>
<div class="a" style="left:66px;top:516px;font-size:10.5px;line-height:10px;color:#b4b4b4">0</div>
<div class="a" style="left:66px;top:553px;font-size:10.5px;line-height:10px;color:#b4b4b4">3</div>
<div class="a" style="left:66px;top:563px;font-size:10.5px;line-height:10px;color:#b4b4b4">5</div>
<div class="b" style="left:211px;top:219px;width:634px;height:284px;background:#46ab8c"></div>
<svg style="left:0;top:0" width="1266" height="735" fill="none" stroke="#e9f6f1" stroke-width="0.9" stroke-linejoin="round"><path d="M466.2 260.3H565.3L602.5 297V430.7H466.2Z"/><path d="M565.3 260.3V297H602.5"/><path d="M520.8 282V287.5" stroke-width="0.7"/><circle cx="478.4" cy="320.2" r="4.8"/><circle cx="478.4" cy="372.4" r="4.8"/><rect x="493.4" y="308.5" width="27.8" height="5.6"/><rect x="493.4" y="324.8" width="27.8" height="5.6"/><path d="M515.5 356.5H493.3V362.1H517.0"/><path d="M513.0 372.2H493.3V377.8H514.5"/><path d="M509.8 388.1H493.3V393.7H510.4"/><path d="M512.3 404.1H493.3V409.7H512.9"/><path d="M522.6 441.4L515.7 423L512 401L508.4 382.7L514.5 371.6L519.5 363.8"/><path d="M524.6 363L539 362.6L554.9 359.9L563.5 371.6L575 392.5L568.4 405.9L556.1 428L554.9 439.5"/><path d="M532.5 374.3L539 376.5L546.8 375.3L550.2 383.9L542.3 393.8"/><path d="M526.2 379.5L524.8 386L531.3 396.7L534.3 396.9"/><path d="M509.6 338.6L510.8 347.2L546 418.6"/><path d="M509.6 338.6L517.7 345.2L553 415.8"/><path d="M510.8 347.2L514 345.3L517.7 345.2"/><circle cx="549.5" cy="417.3" r="3.5"/><path d="M514 442.7L563.5 439.7L564 451.2L514.5 454.2Z"/><path d="M510.8 503L508.4 455.6L569.6 451.7L571.3 503"/></svg><svg style="left:0;top:0" width="1266" height="735"><path d="M449.4 466.6V480.2L452.5 477.4L454.9 482.9L457.2 481.9L454.9 476.6H459.2Z" fill="#000" stroke="#fff" stroke-width="0.9" stroke-linejoin="round" style="filter:drop-shadow(0 1px 1px rgba(0,0,0,.45))"/></svg>
<div class="b" style="left:65px;top:597px;width:262px;height:16px;background:#4f4f4f"></div>
<svg style="left:127px;top:598px" width="16" height="13" viewBox="0 0 16 13"><path d="M8 3H1.600V11.400H11.400V8" stroke="#dcdcdc" stroke-width="1.300" fill="none"/><path d="M4.600 8.600C5 5.400 7 3.800 10 3.800V1.400L14.400 4.800L10 8.200V5.800C7.600 5.800 6 6.600 4.600 8.600Z" fill="#dcdcdc"/></svg>
<svg style="left:316px;top:600px" width="8" height="11" viewBox="0 0 8 11"><path d="M2 1L5.800 5.500L2 10" stroke="#d8d8d8" stroke-width="1" fill="none"/></svg>
<svg style="left:65px;top:108px" width="17" height="17" shape-rendering="crispEdges"><path d="M12.500 0V17M0 12.500H17" stroke="#7c7c7c" stroke-width="1" stroke-dasharray="1 1" fill="none"/></svg>
<div class="a" style="left:76px;top:599px;font-size:11px;line-height:12px;color:#dedede;letter-spacing:.25px">66.67%</div>
<div class="a" style="left:182px;top:599px;font-size:11px;line-height:12px;color:#dedede;letter-spacing:.2px">Doc: 4.62M/36.2M</div><div class="b" style="left:65px;top:616px;width:926px;height:119px;background:#444"></div>
<div class="b" style="left:65px;top:616px;width:926px;height:27px;background:#424242"></div>
<div class="b" style="left:65px;top:616px;width:62px;height:29px;background:#515151"></div>
<div class="a" style="left:74px;top:623px;font-size:11.1px;line-height:14px;font-weight:bold;color:#f0f0f0">Timeline</div>
<svg style="left:975px;top:626px" width="10" height="8" shape-rendering="crispEdges"><rect x="0" y="0" width="10" height="1" fill="#c8c8c8"/><rect x="0" y="2" width="10" height="1" fill="#c8c8c8"/><rect x="0" y="4" width="10" height="1" fill="#c8c8c8"/><rect x="0" y="6" width="10" height="1" fill="#c8c8c8"/></svg>
<div class="b" style="left:65px;top:644px;width:926px;height:70px;background:#535353;overflow:hidden" id="fr">
<div class="b" style="left:0px;top:1px;width:54px;height:69px;background:#6a6a6a"></div>
<div class="b" style="left:54px;top:0;width:1px;height:70px;background:#444"></div>
<div class="b" style="left:3px;top:5px;width:48px;height:49px;border:1px solid #f4f4f4;background:#535353"></div>
<div class="b" style="left:5px;top:7px;width:44px;height:45px;border:1px solid #757575"></div>
<div class="b" style="left:5px;top:7px;width:12px;height:13px;border:1px solid #6c6c6c;background:#535353"></div>
<div class="a" style="left:7px;top:7px;font-size:11.5px;line-height:13px;color:#f4f4f4;font-weight:bold;">1</div>
<div class="b" style="left:6px;top:20px;width:42px;height:19px;background:#46ab8c"></div>
<svg style="left:24px;top:22px" width="9" height="16" viewBox="0 0 9 16"><path d="M1 1.6H7M2 4.6H6M3.6 7V14.6M5.4 8L6.4 13.4" stroke="#a6dcc8" stroke-width="0.9" fill="none" stroke-dasharray="2 1" opacity=".85"/></svg>
<div class="a" style="left:13px;top:56px;font-size:11px;line-height:13px;color:#ececec">0 sec.</div>
<svg style="left:43px;top:60px" width="7" height="5" viewBox="0 0 7 5"><path d="M0.8 0.6L3.5 3.8L6.2 0.6" stroke="#d8d8d8" stroke-width="0.9" fill="none"/></svg>
<div class="b" style="left:109px;top:0;width:1px;height:70px;background:#444"></div>
<div class="b" style="left:60px;top:7px;width:44px;height:45px;border:1px solid #6c6c6c;background:#535353"></div>
<div class="b" style="left:60px;top:7px;width:12px;height:13px;border:1px solid #6c6c6c;background:#535353"></div>
<div class="a" style="left:62px;top:7px;font-size:11.5px;line-height:13px;color:#f4f4f4;">2</div>
<div class="b" style="left:61px;top:20px;width:42px;height:19px;background:#46ab8c"></div>
<svg style="left:79px;top:22px" width="9" height="16" viewBox="0 0 9 16"><path d="M1 1.6H7M2 4.6H6M3.6 7V14.6M5.4 8L6.4 13.4" stroke="#a6dcc8" stroke-width="0.9" fill="none" stroke-dasharray="2 1" opacity=".85"/></svg>
<div class="a" style="left:68px;top:56px;font-size:11px;line-height:13px;color:#ececec">0 sec.</div>
<svg style="left:98px;top:60px" width="7" height="5" viewBox="0 0 7 5"><path d="M0.8 0.6L3.5 3.8L6.2 0.6" stroke="#d8d8d8" stroke-width="0.9" fill="none"/></svg>
<div class="b" style="left:164px;top:0;width:1px;height:70px;background:#444"></div>
<div class="b" style="left:115px;top:7px;width:44px;height:45px;border:1px solid #6c6c6c;background:#535353"></div>
<div class="b" style="left:115px;top:7px;width:12px;height:13px;border:1px solid #6c6c6c;background:#535353"></div>
<div class="a" style="left:117px;top:7px;font-size:11.5px;line-height:13px;color:#f4f4f4;">3</div>
<div class="b" style="left:116px;top:20px;width:42px;height:19px;background:#46ab8c"></div>
<svg style="left:134px;top:22px" width="9" height="16" viewBox="0 0 9 16"><path d="M1 1.6H7M2 4.6H6M3.6 7V14.6M5.4 8L6.4 13.4" stroke="#a6dcc8" stroke-width="0.9" fill="none" stroke-dasharray="2 1" opacity=".85"/></svg>
<div class="a" style="left:123px;top:56px;font-size:11px;line-height:13px;color:#ececec">0 sec.</div>
<svg style="left:153px;top:60px" width="7" height="5" viewBox="0 0 7 5"><path d="M0.8 0.6L3.5 3.8L6.2 0.6" stroke="#d8d8d8" stroke-width="0.9" fill="none"/></svg>
<div class="b" style="left:219px;top:0;width:1px;height:70px;background:#444"></div>
<div class="b" style="left:170px;top:7px;width:44px;height:45px;border:1px solid #6c6c6c;background:#535353"></div>
<div class="b" style="left:170px;top:7px;width:12px;height:13px;border:1px solid #6c6c6c;background:#535353"></div>
<div class="a" style="left:172px;top:7px;font-size:11.5px;line-height:13px;color:#f4f4f4;">4</div>
<div class="b" style="left:171px;top:20px;width:42px;height:19px;background:#46ab8c"></div>
<svg style="left:189px;top:22px" width="9" height="16" viewBox="0 0 9 16"><path d="M1 1.6H7M2 4.6H6M3.6 7V14.6M5.4 8L6.4 13.4" stroke="#a6dcc8" stroke-width="0.9" fill="none" stroke-dasharray="2 1" opacity=".85"/></svg>
<div class="a" style="left:178px;top:56px;font-size:11px;line-height:13px;color:#ececec">0 sec.</div>
<svg style="left:208px;top:60px" width="7" height="5" viewBox="0 0 7 5"><path d="M0.8 0.6L3.5 3.8L6.2 0.6" stroke="#d8d8d8" stroke-width="0.9" fill="none"/></svg>
<div class="b" style="left:274px;top:0;width:1px;height:70px;background:#444"></div>
<div class="b" style="left:225px;top:7px;width:44px;height:45px;border:1px solid #6c6c6c;background:#535353"></div>
<div class="b" style="left:225px;top:7px;width:12px;height:13px;border:1px solid #6c6c6c;background:#535353"></div>
<div class="a" style="left:227px;top:7px;font-size:11.5px;line-height:13px;color:#f4f4f4;">5</div>
<div class="b" style="left:226px;top:20px;width:42px;height:19px;background:#46ab8c"></div>
<svg style="left:244px;top:22px" width="9" height="16" viewBox="0 0 9 16"><path d="M1 1.6H7M2 4.6H6M3.6 7V14.6M5.4 8L6.4 13.4" stroke="#a6dcc8" stroke-width="0.9" fill="none" stroke-dasharray="2 1" opacity=".85"/></svg>
<div class="a" style="left:233px;top:56px;font-size:11px;line-height:13px;color:#ececec">0 sec.</div>
<svg style="left:263px;top:60px" width="7" height="5" viewBox="0 0 7 5"><path d="M0.8 0.6L3.5 3.8L6.2 0.6" stroke="#d8d8d8" stroke-width="0.9" fill="none"/></svg>
<div class="b" style="left:329px;top:0;width:1px;height:70px;background:#444"></div>
<div class="b" style="left:280px;top:7px;width:44px;height:45px;border:1px solid #6c6c6c;background:#535353"></div>
<div class="b" style="left:280px;top:7px;width:12px;height:13px;border:1px solid #6c6c6c;background:#535353"></div>
<div class="a" style="left:282px;top:7px;font-size:11.5px;line-height:13px;color:#f4f4f4;">6</div>
<div class="b" style="left:281px;top:20px;width:42px;height:19px;background:#46ab8c"></div>
<svg style="left:299px;top:22px" width="9" height="16" viewBox="0 0 9 16"><path d="M1 1.6H7M2 4.6H6M3.6 7V14.6M5.4 8L6.4 13.4" stroke="#a6dcc8" stroke-width="0.9" fill="none" stroke-dasharray="2 1" opacity=".85"/></svg>
<div class="a" style="left:288px;top:56px;font-size:11px;line-height:13px;color:#ececec">0 sec.</div>
<svg style="left:318px;top:60px" width="7" height="5" viewBox="0 0 7 5"><path d="M0.8 0.6L3.5 3.8L6.2 0.6" stroke="#d8d8d8" stroke-width="0.9" fill="none"/></svg>
<div class="b" style="left:384px;top:0;width:1px;height:70px;background:#444"></div>
<div class="b" style="left:335px;top:7px;width:44px;height:45px;border:1px solid #6c6c6c;background:#535353"></div>
<div class="b" style="left:335px;top:7px;width:12px;height:13px;border:1px solid #6c6c6c;background:#535353"></div>
<div class="a" style="left:337px;top:7px;font-size:11.5px;line-height:13px;color:#f4f4f4;">7</div>
<div class="b" style="left:336px;top:20px;width:42px;height:19px;background:#46ab8c"></div>
<svg style="left:354px;top:22px" width="9" height="16" viewBox="0 0 9 16"><path d="M1 1.6H7M2 4.6H6M3.6 7V14.6M5.4 8L6.4 13.4" stroke="#a6dcc8" stroke-width="0.9" fill="none" stroke-dasharray="2 1" opacity=".85"/></svg>
<div class="a" style="left:343px;top:56px;font-size:11px;line-height:13px;color:#ececec">0 sec.</div>
<svg style="left:373px;top:60px" width="7" height="5" viewBox="0 0 7 5"><path d="M0.8 0.6L3.5 3.8L6.2 0.6" stroke="#d8d8d8" stroke-width="0.9" fill="none"/></svg>
<div class="b" style="left:439px;top:0;width:1px;height:70px;background:#444"></div>
<div class="b" style="left:390px;top:7px;width:44px;height:45px;border:1px solid #6c6c6c;background:#535353"></div>
<div class="b" style="left:390px;top:7px;width:12px;height:13px;border:1px solid #6c6c6c;background:#535353"></div>
<div class="a" style="left:392px;top:7px;font-size:11.5px;line-height:13px;color:#f4f4f4;">8</div>
<div class="b" style="left:391px;top:20px;width:42px;height:19px;background:#46ab8c"></div>
<svg style="left:409px;top:22px" width="9" height="16" viewBox="0 0 9 16"><path d="M1 1.6H7M2 4.6H6M3.6 7V14.6M5.4 8L6.4 13.4" stroke="#a6dcc8" stroke-width="0.9" fill="none" stroke-dasharray="2 1" opacity=".85"/></svg>
<div class="a" style="left:398px;top:56px;font-size:11px;line-height:13px;color:#ececec">0 sec.</div>
<svg style="left:428px;top:60px" width="7" height="5" viewBox="0 0 7 5"><path d="M0.8 0.6L3.5 3.8L6.2 0.6" stroke="#d8d8d8" stroke-width="0.9" fill="none"/></svg>
<div class="b" style="left:494px;top:0;width:1px;height:70px;background:#444"></div>
<div class="b" style="left:445px;top:7px;width:44px;height:45px;border:1px solid #6c6c6c;background:#535353"></div>
<div class="b" style="left:445px;top:7px;width:12px;height:13px;border:1px solid #6c6c6c;background:#535353"></div>
<div class="a" style="left:447px;top:7px;font-size:11.5px;line-height:13px;color:#f4f4f4;">9</div>
<div class="b" style="left:446px;top:20px;width:42px;height:19px;background:#46ab8c"></div>
<svg style="left:464px;top:22px" width="9" height="16" viewBox="0 0 9 16"><path d="M1 1.6H7M2 4.6H6M3.6 7V14.6M5.4 8L6.4 13.4" stroke="#a6dcc8" stroke-width="0.9" fill="none" stroke-dasharray="2 1" opacity=".85"/></svg>
<div class="a" style="left:453px;top:56px;font-size:11px;line-height:13px;color:#ececec">0 sec.</div>
<svg style="left:483px;top:60px" width="7" height="5" viewBox="0 0 7 5"><path d="M0.8 0.6L3.5 3.8L6.2 0.6" stroke="#d8d8d8" stroke-width="0.9" fill="none"/></svg>
<div class="b" style="left:549px;top:0;width:1px;height:70px;background:#444"></div>
<div class="b" style="left:500px;top:7px;width:44px;height:45px;border:1px solid #6c6c6c;background:#535353"></div>
<div class="b" style="left:500px;top:7px;width:19px;height:13px;border:1px solid #6c6c6c;background:#535353"></div>
<div class="a" style="left:502px;top:7px;font-size:11.5px;line-height:13px;color:#f4f4f4;">10</div>
<div class="b" style="left:501px;top:20px;width:42px;height:19px;background:#46ab8c"></div>
<svg style="left:519px;top:22px" width="9" height="16" viewBox="0 0 9 16"><path d="M1 1.6H7M2 4.6H6M3.6 7V14.6M5.4 8L6.4 13.4" stroke="#a6dcc8" stroke-width="0.9" fill="none" stroke-dasharray="2 1" opacity=".85"/></svg>
<div class="a" style="left:508px;top:56px;font-size:11px;line-height:13px;color:#ececec">0 sec.</div>
<svg style="left:538px;top:60px" width="7" height="5" viewBox="0 0 7 5"><path d="M0.8 0.6L3.5 3.8L6.2 0.6" stroke="#d8d8d8" stroke-width="0.9" fill="none"/></svg>
<div class="b" style="left:605px;top:0;width:1px;height:70px;background:#444"></div>
<div class="b" style="left:555px;top:7px;width:44px;height:45px;border:1px solid #6c6c6c;background:#535353"></div>
<div class="b" style="left:555px;top:7px;width:19px;height:13px;border:1px solid #6c6c6c;background:#535353"></div>
<div class="a" style="left:557px;top:7px;font-size:11.5px;line-height:13px;color:#f4f4f4;">11</div>
<div class="b" style="left:556px;top:20px;width:42px;height:19px;background:#46ab8c"></div>
<svg style="left:574px;top:22px" width="9" height="16" viewBox="0 0 9 16"><path d="M1 1.6H7M2 4.6H6M3.6 7V14.6M5.4 8L6.4 13.4" stroke="#a6dcc8" stroke-width="0.9" fill="none" stroke-dasharray="2 1" opacity=".85"/></svg>
<div class="a" style="left:563px;top:56px;font-size:11px;line-height:13px;color:#ececec">0 sec.</div>
<svg style="left:593px;top:60px" width="7" height="5" viewBox="0 0 7 5"><path d="M0.8 0.6L3.5 3.8L6.2 0.6" stroke="#d8d8d8" stroke-width="0.9" fill="none"/></svg>
<div class="b" style="left:660px;top:0;width:1px;height:70px;background:#444"></div>
<div class="b" style="left:611px;top:7px;width:44px;height:45px;border:1px solid #6c6c6c;background:#535353"></div>
<div class="b" style="left:611px;top:7px;width:19px;height:13px;border:1px solid #6c6c6c;background:#535353"></div>
<div class="a" style="left:613px;top:7px;font-size:11.5px;line-height:13px;color:#f4f4f4;">12</div>
<div class="b" style="left:612px;top:20px;width:42px;height:19px;background:#46ab8c"></div>
<svg style="left:630px;top:22px" width="9" height="16" viewBox="0 0 9 16"><path d="M1 1.6H7M2 4.6H6M3.6 7V14.6M5.4 8L6.4 13.4" stroke="#a6dcc8" stroke-width="0.9" fill="none" stroke-dasharray="2 1" opacity=".85"/></svg>
<div class="a" style="left:619px;top:56px;font-size:11px;line-height:13px;color:#ececec">0 sec.</div>
<svg style="left:649px;top:60px" width="7" height="5" viewBox="0 0 7 5"><path d="M0.8 0.6L3.5 3.8L6.2 0.6" stroke="#d8d8d8" stroke-width="0.9" fill="none"/></svg>
<div class="b" style="left:715px;top:0;width:1px;height:70px;background:#444"></div>
<div class="b" style="left:666px;top:7px;width:44px;height:45px;border:1px solid #6c6c6c;background:#535353"></div>
<div class="b" style="left:666px;top:7px;width:19px;height:13px;border:1px solid #6c6c6c;background:#535353"></div>
<div class="a" style="left:668px;top:7px;font-size:11.5px;line-height:13px;color:#f4f4f4;">13</div>
<div class="b" style="left:667px;top:20px;width:42px;height:19px;background:#46ab8c"></div>
<svg style="left:685px;top:22px" width="9" height="16" viewBox="0 0 9 16"><path d="M1 1.6H7M2 4.6H6M3.6 7V14.6M5.4 8L6.4 13.4" stroke="#a6dcc8" stroke-width="0.9" fill="none" stroke-dasharray="2 1" opacity=".85"/></svg>
<div class="a" style="left:674px;top:56px;font-size:11px;line-height:13px;color:#ececec">0 sec.</div>
<svg style="left:704px;top:60px" width="7" height="5" viewBox="0 0 7 5"><path d="M0.8 0.6L3.5 3.8L6.2 0.6" stroke="#d8d8d8" stroke-width="0.9" fill="none"/></svg>
<div class="b" style="left:770px;top:0;width:1px;height:70px;background:#444"></div>
<div class="b" style="left:721px;top:7px;width:44px;height:45px;border:1px solid #6c6c6c;background:#535353"></div>
<div class="b" style="left:721px;top:7px;width:19px;height:13px;border:1px solid #6c6c6c;background:#535353"></div>
<div class="a" style="left:723px;top:7px;font-size:11.5px;line-height:13px;color:#f4f4f4;">14</div>
<div class="b" style="left:722px;top:20px;width:42px;height:19px;background:#46ab8c"></div>
<svg style="left:740px;top:22px" width="9" height="16" viewBox="0 0 9 16"><path d="M1 1.6H7M2 4.6H6M3.6 7V14.6M5.4 8L6.4 13.4" stroke="#a6dcc8" stroke-width="0.9" fill="none" stroke-dasharray="2 1" opacity=".85"/></svg>
<div class="a" style="left:729px;top:56px;font-size:11px;line-height:13px;color:#ececec">0 sec.</div>
<svg style="left:759px;top:60px" width="7" height="5" viewBox="0 0 7 5"><path d="M0.8 0.6L3.5 3.8L6.2 0.6" stroke="#d8d8d8" stroke-width="0.9" fill="none"/></svg>
<div class="b" style="left:825px;top:0;width:1px;height:70px;background:#444"></div>
<div class="b" style="left:776px;top:7px;width:44px;height:45px;border:1px solid #6c6c6c;background:#535353"></div>
<div class="b" style="left:776px;top:7px;width:19px;height:13px;border:1px solid #6c6c6c;background:#535353"></div>
<div class="a" style="left:778px;top:7px;font-size:11.5px;line-height:13px;color:#f4f4f4;">15</div>
<div class="b" style="left:777px;top:20px;width:42px;height:19px;background:#46ab8c"></div>
<svg style="left:795px;top:22px" width="9" height="16" viewBox="0 0 9 16"><path d="M1 1.6H7M2 4.6H6M3.6 7V14.6M5.4 8L6.4 13.4" stroke="#a6dcc8" stroke-width="0.9" fill="none" stroke-dasharray="2 1" opacity=".85"/></svg>
<div class="a" style="left:784px;top:56px;font-size:11px;line-height:13px;color:#ececec">0 sec.</div>
<svg style="left:814px;top:60px" width="7" height="5" viewBox="0 0 7 5"><path d="M0.8 0.6L3.5 3.8L6.2 0.6" stroke="#d8d8d8" stroke-width="0.9" fill="none"/></svg>
<div class="b" style="left:880px;top:0;width:1px;height:70px;background:#444"></div>
<div class="b" style="left:831px;top:7px;width:44px;height:45px;border:1px solid #6c6c6c;background:#535353"></div>
<div class="b" style="left:831px;top:7px;width:19px;height:13px;border:1px solid #6c6c6c;background:#535353"></div>
<div class="a" style="left:833px;top:7px;font-size:11.5px;line-height:13px;color:#f4f4f4;">16</div>
<div class="b" style="left:832px;top:20px;width:42px;height:19px;background:#46ab8c"></div>
<svg style="left:850px;top:22px" width="9" height="16" viewBox="0 0 9 16"><path d="M1 1.6H7M2 4.6H6M3.6 7V14.6M5.4 8L6.4 13.4" stroke="#a6dcc8" stroke-width="0.9" fill="none" stroke-dasharray="2 1" opacity=".85"/></svg>
<div class="a" style="left:839px;top:56px;font-size:11px;line-height:13px;color:#ececec">0 sec.</div>
<svg style="left:869px;top:60px" width="7" height="5" viewBox="0 0 7 5"><path d="M0.8 0.6L3.5 3.8L6.2 0.6" stroke="#d8d8d8" stroke-width="0.9" fill="none"/></svg>
<div class="b" style="left:935px;top:0;width:1px;height:70px;background:#444"></div>
<div class="b" style="left:886px;top:7px;width:44px;height:45px;border:1px solid #6c6c6c;background:#535353"></div>
<div class="b" style="left:886px;top:7px;width:19px;height:13px;border:1px solid #6c6c6c;background:#535353"></div>
<div class="a" style="left:888px;top:7px;font-size:11.5px;line-height:13px;color:#f4f4f4;">17</div>
<div class="b" style="left:887px;top:20px;width:42px;height:19px;background:#46ab8c"></div>
<svg style="left:905px;top:22px" width="9" height="16" viewBox="0 0 9 16"><path d="M1 1.6H7M2 4.6H6M3.6 7V14.6M5.4 8L6.4 13.4" stroke="#a6dcc8" stroke-width="0.9" fill="none" stroke-dasharray="2 1" opacity=".85"/></svg>
<div class="a" style="left:894px;top:56px;font-size:11px;line-height:13px;color:#ececec">0 sec.</div>
<svg style="left:924px;top:60px" width="7" height="5" viewBox="0 0 7 5"><path d="M0.8 0.6L3.5 3.8L6.2 0.6" stroke="#d8d8d8" stroke-width="0.9" fill="none"/></svg>
</div>
<div class="b" style="left:65px;top:644px;width:926px;height:2px;background:#454545"></div>
<div class="b" style="left:65px;top:716px;width:306px;height:19px;background:#535353"></div>
<div class="b" style="left:95px;top:716px;width:1px;height:19px;background:#454545"></div>
<div class="b" style="left:166px;top:716px;width:1px;height:19px;background:#454545"></div>
<div class="b" style="left:283px;top:716px;width:1px;height:19px;background:#454545"></div>
<svg style="left:72px;top:720px" width="15" height="13" viewBox="0 0 15 13"><path d="M5.4 0.8V12.4M3.6 1H7.2" stroke="#c4c4c4" stroke-width="1.4" fill="none"/><path d="M1 4H4.4M1 6.6H4.4M1 9.2H4.4M1 11.6H4.4M7 4.4H12.4M7 7.4H14M7 10.4H12.4" stroke="#c4c4c4" stroke-width="1.3" fill="none"/></svg>
<div class="a" style="left:110px;top:721px;font-size:10.6px;line-height:13px;color:#9c9c9c">Once</div>
<svg style="left:154px;top:724px" width="8" height="6" viewBox="0 0 8 6"><path d="M0.6 0.6H7.4L4 5.4Z" fill="#d0d0d0"/></svg>
<svg style="left:175px;top:722px" width="12" height="10" viewBox="0 0 12 10"><path d="M1.4 1V9" stroke="#9a9a9a" stroke-width="1.4"/><path d="M10.6 1V9L3.4 5Z" fill="#9a9a9a"/></svg>
<svg style="left:202px;top:722px" width="13" height="10" viewBox="0 0 13 10"><path d="M8 0.8V9.2L1 5Z" fill="#c4c4c4"/><path d="M10.6 1V9" stroke="#c4c4c4" stroke-width="1.8"/></svg>
<svg style="left:234px;top:721px" width="11" height="12" viewBox="0 0 11 12"><path d="M1 0.8V11.2L10.4 6Z" fill="#c4c4c4"/></svg>
<svg style="left:262px;top:722px" width="13" height="10" viewBox="0 0 13 10"><path d="M5 0.8V9.2L12 5Z" fill="#c4c4c4"/><path d="M2.4 1V9" stroke="#c4c4c4" stroke-width="1.8"/></svg>
<svg style="left:290px;top:720px" width="15" height="13" viewBox="0 0 15 13"><path d="M1 1.2L5.2 3L3.2 5.2Z" fill="#8a8a8a"/><circle cx="6.4" cy="5.8" r="1.3" fill="#8a8a8a"/><circle cx="8.8" cy="7.8" r="1.5" fill="#8a8a8a"/><circle cx="11.6" cy="10" r="2" fill="#8a8a8a"/></svg>
<svg style="left:320px;top:721px" width="12" height="12" viewBox="0 0 12 12"><path d="M1.2 1H10.8V11H4.2L1.2 8Z" stroke="#c4c4c4" stroke-width="1.2" fill="none"/><path d="M1.2 8H4.2V11Z" fill="#c4c4c4"/></svg>
<svg style="left:350px;top:720px" width="12" height="14" viewBox="0 0 12 14"><path d="M1.6 3.6H10.4L9.6 13.2H2.4Z" fill="#9a9a9a"/><path d="M0.6 2.4H11.4M4 2.2V0.8H8V2.2" stroke="#9a9a9a" stroke-width="1.1" fill="none"/><path d="M4.2 5.4V11.4M6 5.4V11.4M7.8 5.4V11.4" stroke="#535353" stroke-width="0.7"/></svg>
<div class="b" style="left:371px;top:716px;width:620px;height:19px;background:#464646"></div>
<div class="b" style="left:374px;top:728px;width:455px;height:14px;background:#686868;border-radius:5px"></div>
<div class="b" style="left:972px;top:716px;width:19px;height:19px;background:#4f4f4f"></div>
<div class="b" style="left:608px;top:693px;width:127px;height:26px;background:rgba(160,160,158,.94);border-radius:5px"></div>
<svg style="left:664px;top:719px" width="16" height="8" viewBox="0 0 16 8"><path d="M0 0H16L8 7.6Z" fill="rgba(160,160,158,.94)"/></svg>
<div class="a" style="left:608px;top:697px;width:127px;text-align:center;font-size:14.1px;line-height:18px;color:#2a2a2a">Google Chrome</div><div class="b" style="left:994px;top:79px;width:272px;height:11px;background:#424242"></div>
<svg style="left:1017px;top:81px" width="10" height="8" viewBox="0 0 10 8"><path d="M4 1L1.4 4L4 7M8 1L5.4 4L8 7" stroke="#bdbdbd" stroke-width="0.9" fill="none"/></svg>
<svg style="left:1259px;top:81px" width="10" height="8" viewBox="0 0 10 8"><path d="M1.4 1L4 4L1.4 7M5.4 1L8 4L5.4 7" stroke="#bdbdbd" stroke-width="0.9" fill="none"/></svg>
<div class="b" style="left:994px;top:91px;width:37px;height:644px;background:#535353"></div>
<div class="b" style="left:994px;top:131px;width:37px;height:1px;background:#3c3c3c"></div>
<div class="b" style="left:994px;top:200px;width:37px;height:1px;background:#3c3c3c"></div>
<div class="b" style="left:994px;top:270px;width:37px;height:1px;background:#3c3c3c"></div>
<div class="b" style="left:994px;top:310px;width:37px;height:1px;background:#3c3c3c"></div>
<div class="b" style="left:994px;top:351px;width:37px;height:1px;background:#3c3c3c"></div>
<div class="b" style="left:994px;top:392px;width:37px;height:1px;background:#3c3c3c"></div>
<div class="b" style="left:994px;top:462px;width:37px;height:1px;background:#3c3c3c"></div>
<div class="b" style="left:994px;top:501px;width:37px;height:1px;background:#3c3c3c"></div>
<svg style="left:1003px;top:94px" width="20" height="4" shape-rendering="crispEdges"><rect x="0" y="0" width="1" height="4" fill="#6a6a6a"/><rect x="2" y="0" width="1" height="4" fill="#6a6a6a"/><rect x="4" y="0" width="1" height="4" fill="#6a6a6a"/><rect x="6" y="0" width="1" height="4" fill="#6a6a6a"/><rect x="8" y="0" width="1" height="4" fill="#6a6a6a"/><rect x="10" y="0" width="1" height="4" fill="#6a6a6a"/><rect x="12" y="0" width="1" height="4" fill="#6a6a6a"/><rect x="14" y="0" width="1" height="4" fill="#6a6a6a"/><rect x="16" y="0" width="1" height="4" fill="#6a6a6a"/><rect x="18" y="0" width="1" height="4" fill="#6a6a6a"/></svg>
<svg style="left:1003px;top:134px" width="20" height="4" shape-rendering="crispEdges"><rect x="0" y="0" width="1" height="4" fill="#6a6a6a"/><rect x="2" y="0" width="1" height="4" fill="#6a6a6a"/><rect x="4" y="0" width="1" height="4" fill="#6a6a6a"/><rect x="6" y="0" width="1" height="4" fill="#6a6a6a"/><rect x="8" y="0" width="1" height="4" fill="#6a6a6a"/><rect x="10" y="0" width="1" height="4" fill="#6a6a6a"/><rect x="12" y="0" width="1" height="4" fill="#6a6a6a"/><rect x="14" y="0" width="1" height="4" fill="#6a6a6a"/><rect x="16" y="0" width="1" height="4" fill="#6a6a6a"/><rect x="18" y="0" width="1" height="4" fill="#6a6a6a"/></svg>
<svg style="left:1003px;top:204px" width="20" height="4" shape-rendering="crispEdges"><rect x="0" y="0" width="1" height="4" fill="#6a6a6a"/><rect x="2" y="0" width="1" height="4" fill="#6a6a6a"/><rect x="4" y="0" width="1" height="4" fill="#6a6a6a"/><rect x="6" y="0" width="1" height="4" fill="#6a6a6a"/><rect x="8" y="0" width="1" height="4" fill="#6a6a6a"/><rect x="10" y="0" width="1" height="4" fill="#6a6a6a"/><rect x="12" y="0" width="1" height="4" fill="#6a6a6a"/><rect x="14" y="0" width="1" height="4" fill="#6a6a6a"/><rect x="16" y="0" width="1" height="4" fill="#6a6a6a"/><rect x="18" y="0" width="1" height="4" fill="#6a6a6a"/></svg>
<svg style="left:1003px;top:273px" width="20" height="4" shape-rendering="crispEdges"><rect x="0" y="0" width="1" height="4" fill="#6a6a6a"/><rect x="2" y="0" width="1" height="4" fill="#6a6a6a"/><rect x="4" y="0" width="1" height="4" fill="#6a6a6a"/><rect x="6" y="0" width="1" height="4" fill="#6a6a6a"/><rect x="8" y="0" width="1" height="4" fill="#6a6a6a"/><rect x="10" y="0" width="1" height="4" fill="#6a6a6a"/><rect x="12" y="0" width="1" height="4" fill="#6a6a6a"/><rect x="14" y="0" width="1" height="4" fill="#6a6a6a"/><rect x="16" y="0" width="1" height="4" fill="#6a6a6a"/><rect x="18" y="0" width="1" height="4" fill="#6a6a6a"/></svg>
<svg style="left:1003px;top:313px" width="20" height="4" shape-rendering="crispEdges"><rect x="0" y="0" width="1" height="4" fill="#6a6a6a"/><rect x="2" y="0" width="1" height="4" fill="#6a6a6a"/><rect x="4" y="0" width="1" height="4" fill="#6a6a6a"/><rect x="6" y="0" width="1" height="4" fill="#6a6a6a"/><rect x="8" y="0" width="1" height="4" fill="#6a6a6a"/><rect x="10" y="0" width="1" height="4" fill="#6a6a6a"/><rect x="12" y="0" width="1" height="4" fill="#6a6a6a"/><rect x="14" y="0" width="1" height="4" fill="#6a6a6a"/><rect x="16" y="0" width="1" height="4" fill="#6a6a6a"/><rect x="18" y="0" width="1" height="4" fill="#6a6a6a"/></svg>
<svg style="left:1003px;top:354px" width="20" height="4" shape-rendering="crispEdges"><rect x="0" y="0" width="1" height="4" fill="#6a6a6a"/><rect x="2" y="0" width="1" height="4" fill="#6a6a6a"/><rect x="4" y="0" width="1" height="4" fill="#6a6a6a"/><rect x="6" y="0" width="1" height="4" fill="#6a6a6a"/><rect x="8" y="0" width="1" height="4" fill="#6a6a6a"/><rect x="10" y="0" width="1" height="4" fill="#6a6a6a"/><rect x="12" y="0" width="1" height="4" fill="#6a6a6a"/><rect x="14" y="0" width="1" height="4" fill="#6a6a6a"/><rect x="16" y="0" width="1" height="4" fill="#6a6a6a"/><rect x="18" y="0" width="1" height="4" fill="#6a6a6a"/></svg>
<svg style="left:1003px;top:395px" width="20" height="4" shape-rendering="crispEdges"><rect x="0" y="0" width="1" height="4" fill="#6a6a6a"/><rect x="2" y="0" width="1" height="4" fill="#6a6a6a"/><rect x="4" y="0" width="1" height="4" fill="#6a6a6a"/><rect x="6" y="0" width="1" height="4" fill="#6a6a6a"/><rect x="8" y="0" width="1" height="4" fill="#6a6a6a"/><rect x="10" y="0" width="1" height="4" fill="#6a6a6a"/><rect x="12" y="0" width="1" height="4" fill="#6a6a6a"/><rect x="14" y="0" width="1" height="4" fill="#6a6a6a"/><rect x="16" y="0" width="1" height="4" fill="#6a6a6a"/><rect x="18" y="0" width="1" height="4" fill="#6a6a6a"/></svg>
<svg style="left:1003px;top:465px" width="20" height="4" shape-rendering="crispEdges"><rect x="0" y="0" width="1" height="4" fill="#6a6a6a"/><rect x="2" y="0" width="1" height="4" fill="#6a6a6a"/><rect x="4" y="0" width="1" height="4" fill="#6a6a6a"/><rect x="6" y="0" width="1" height="4" fill="#6a6a6a"/><rect x="8" y="0" width="1" height="4" fill="#6a6a6a"/><rect x="10" y="0" width="1" height="4" fill="#6a6a6a"/><rect x="12" y="0" width="1" height="4" fill="#6a6a6a"/><rect x="14" y="0" width="1" height="4" fill="#6a6a6a"/><rect x="16" y="0" width="1" height="4" fill="#6a6a6a"/><rect x="18" y="0" width="1" height="4" fill="#6a6a6a"/></svg>
<svg style="left:1001px;top:102px" width="24" height="24" viewBox="-12 -12 24 24" fill="none"><rect x="-6.6" y="-8" width="4.6" height="4.6" stroke="#d2d2d2" stroke-width="1.1"/><rect x="-6.6" y="-2.2" width="4.6" height="4.6" stroke="#d2d2d2" stroke-width="1.1"/><rect x="-7.2" y="3.4" width="5.8" height="5" fill="#d2d2d2"/><path d="M1.4 7.6C6 4.8 6.6-0.8 2.6-5.4" stroke="#d2d2d2" stroke-width="1.4"/><path d="M0.2-3.6L2-7.8L5.6-4.8Z" fill="#d2d2d2"/></svg>
<svg style="left:1001px;top:143px" width="24" height="24" viewBox="-12 -12 24 24" fill="none"><circle r="5.4" stroke="#d2d2d2" stroke-width="1.3"/><path d="M0-9.6V9.6M-9.6 0H9.6M-6.6-6.6L6.6 6.6M-6.6 6.6L6.6-6.6" stroke="#d2d2d2" stroke-width="1.1"/><circle r="1.9" fill="#535353" stroke="#d2d2d2" stroke-width="0.9"/></svg>
<svg style="left:1001px;top:171px" width="24" height="24" viewBox="-12 -12 24 24" fill="none"><path d="M-9.2 3V-0.6L-8-2.6L-6.8 0.2L-5.4-3.8L-4 0L-2.6-5L-1.200-0.4L0-6.4L1.400-0.4L2.800-5L4.200 0L5.600-3.800L6.800 0.200L8-2.600L9.200-0.600V3Z" fill="#d2d2d2"/><rect x="-9.2" y="3.8" width="18.4" height="1.6" fill="#a4a4a4"/></svg>
<svg style="left:1001px;top:212px" width="24" height="24" viewBox="-12 -12 24 24" fill="none"><path d="M-5.8-5.2L-2.6-6.8L0.4-5.2V-1.4L-2.6 0.4L-5.8-1.4Z M-5.8-5.2L-2.6-3.6L0.4-5.2M-2.6-3.6V0.4" stroke="#d2d2d2" stroke-width="0.9"/><rect x="2.4" y="-7" width="3.6" height="3" fill="#d2d2d2"/><rect x="2.4" y="-2.6" width="3.6" height="3" fill="#d2d2d2"/><rect x="-6.4" y="2.6" width="12.6" height="4.2" fill="#d2d2d2"/><path d="M3 4L4.4 5.8L5.8 4Z" fill="#535353"/></svg>
<svg style="left:1001px;top:241px" width="24" height="24" viewBox="-12 -12 24 24" fill="none"><circle r="7.2" stroke="#d2d2d2" stroke-width="1.3"/><rect x="-0.8" y="-1.4" width="1.7" height="5.4" fill="#d2d2d2"/><circle cy="-3.8" r="1.1" fill="#d2d2d2"/></svg>
<svg style="left:1001px;top:281px" width="24" height="24" viewBox="-12 -12 24 24" fill="none"><path d="M-7.6-7.4H-1V0.6H-7.6Z" stroke="#d2d2d2" stroke-width="1.2"/><path d="M1.2-0.6H7.8V8.2H1.2Z" stroke="#d2d2d2" stroke-width="1.2"/><path d="M-7.6-7.4L1.2-0.6M-1-7.4L7.8-0.6M-7.6 0.6L1.2 8.2M-1 0.6L7.8 8.2" stroke="#d2d2d2" stroke-width="1"/><path d="M3 2L6 6.4" stroke="#d2d2d2" stroke-width="0.9"/></svg>
<div class="a" style="left:1007px;top:323px;font-size:20px;line-height:22px;color:#d2d2d2;font-weight:bold">¶</div>
<div class="a" style="left:1005px;top:364px;font-size:18px;line-height:22px;color:#d2d2d2">A</div>
<div class="b" style="left:1019px;top:366px;width:1px;height:18px;background:#d2d2d2"></div>
<div class="a" style="left:1011px;top:404px;font-size:18px;line-height:20px;color:#d2d2d2;font-weight:bold">¶</div>
<svg style="left:1003px;top:415px" width="10" height="10"><rect x="1" y="1" width="5" height="5" fill="none" stroke="#d2d2d2"/><rect x="3.5" y="3.5" width="5" height="5" fill="#d2d2d2"/></svg>
<div class="a" style="left:1011px;top:433px;font-size:17.5px;line-height:20px;color:#d2d2d2">A</div>
<svg style="left:1003px;top:444px" width="10" height="10"><rect x="1" y="1" width="5" height="5" fill="none" stroke="#d2d2d2"/><rect x="3.5" y="3.5" width="5" height="5" fill="#d2d2d2"/></svg>
<svg style="left:1001px;top:474px" width="24" height="24" viewBox="-12 -12 24 24" fill="none"><path d="M0-8L7-4.4V3.6L0 7.6L-7 3.6V-4.4Z M-7-4.4L0-0.6L7-4.4M0-0.6V7.6" stroke="#d2d2d2" stroke-width="1.2" stroke-linejoin="round"/></svg>
<div class="b" style="left:1034px;top:91px;width:232px;height:297px;background:#535353"></div>
<div class="b" style="left:1034px;top:91px;width:232px;height:27px;background:#424242"></div>
<div class="b" style="left:1034px;top:91px;width:45px;height:28px;background:#535353"></div>
<div class="b" style="left:1080px;top:91px;width:65px;height:27px;background:#434343;border-right:1px solid #383838;border-left:1px solid #383838"></div>
<div class="a" style="left:1043px;top:98px;font-size:11px;letter-spacing:-.2px;line-height:14px;font-weight:bold;color:#f4f4f4">Color</div>
<div class="a" style="left:1087px;top:98px;font-size:11px;letter-spacing:-.42px;line-height:14px;font-weight:bold;color:#b4b4b4">Swatches</div>
<svg style="left:1257px;top:101px" width="10" height="8" shape-rendering="crispEdges"><rect x="0" y="0" width="10" height="1" fill="#c8c8c8"/><rect x="0" y="2" width="10" height="1" fill="#c8c8c8"/><rect x="0" y="4" width="10" height="1" fill="#c8c8c8"/><rect x="0" y="6" width="10" height="1" fill="#c8c8c8"/></svg>
<div class="b" style="left:1054px;top:140px;width:19px;height:19px;background:#ede1d9;border:1px solid #2b2b2b"></div>
<div class="b" style="left:1042px;top:128px;width:22px;height:22px;border:1px solid #8a8a8a"></div>
<div class="b" style="left:1044px;top:130px;width:18px;height:18px;background:#163d46;border:1px solid #f0f0f0"></div>
<svg style="left:1079px;top:126px;overflow:hidden" width="142" height="255" viewBox="0 0 142 255" shape-rendering="crispEdges"><path fill="#ffffff" d="M0 8h1v2h-1zM0 7h2v1h-2zM0 6h3v1h-3zM0 4h4v2h-4zM0 3h5v1h-5zM0 2h6v1h-6zM0 0h7v2h-7z"/><path fill="#e8fafd" d="M1 9h22v1h-22zM1 8h23v1h-23zM2 7h23v1h-23zM3 6h23v1h-23zM4 5h23v1h-23zM4 4h24v1h-24zM5 3h24v1h-24zM6 2h24v1h-24zM7 0h24v2h-24zM12 10h11v1h-11z"/><path fill="#b8e7ef" d="M17 21h26v1h-26zM17 19h27v2h-27zM18 24h20v1h-20zM18 23h22v1h-22zM18 22h24v1h-24zM18 18h27v1h-27zM18 17h28v1h-28zM19 25h17v1h-17zM19 16h27v1h-27zM19 15h28v1h-28zM20 26h13v1h-13zM20 14h28v1h-28zM21 13h27v1h-27zM21 12h28v1h-28zM22 11h28v1h-28zM23 27h8v1h-8zM23 10h27v1h-27zM23 9h28v1h-28zM24 8h28v1h-28zM25 7h27v1h-27zM26 6h27v1h-27zM27 28h1v1h-1zM27 5h26v1h-26zM28 4h26v1h-26zM29 3h26v1h-26zM30 2h25v1h-25zM31 0h25v2h-25z"/><path fill="#96dfeb" d="M42 22h26v1h-26zM43 21h25v1h-25zM43 23h25v1h-25zM43 24h26v1h-26zM44 19h24v2h-24zM44 26h24v1h-24zM44 25h25v1h-25zM45 18h23v1h-23zM45 27h23v1h-23zM46 16h21v1h-21zM46 17h22v1h-22zM47 15h20v1h-20zM48 13h19v2h-19zM49 12h18v1h-18zM50 10h16v1h-16zM50 11h17v1h-17zM51 9h15v1h-15zM52 7h14v2h-14zM53 5h13v2h-13zM54 4h12v1h-12zM55 2h10v2h-10zM56 0h9v2h-9z"/><path fill="#7fe5f7" d="M65 3h21v1h-21zM65 1h22v2h-22zM65 0h23v1h-23zM66 10h15v1h-15zM66 8h16v2h-16zM66 7h17v1h-17zM66 6h18v1h-18zM66 4h19v2h-19zM67 16h9v1h-9zM67 15h10v1h-10zM67 14h11v1h-11zM67 12h12v2h-12zM67 11h13v1h-13zM68 23h2v1h-2zM68 22h3v1h-3zM68 21h4v1h-4zM68 20h5v1h-5zM68 19h6v1h-6zM68 17h7v2h-7zM69 24h1v1h-1z"/><path fill="#68dbef" d="M68 26h4v1h-4zM69 25h7v1h-7zM70 24h11v1h-11zM70 23h16v1h-16zM71 22h19v1h-19zM72 21h22v1h-22zM73 20h24v1h-24zM74 19h23v1h-23zM75 18h23v1h-23zM75 17h24v1h-24zM76 16h24v1h-24zM77 15h23v1h-23zM78 14h22v1h-22zM79 13h21v1h-21zM79 12h22v1h-22zM80 11h21v1h-21zM81 10h20v1h-20zM82 8h19v2h-19zM83 7h18v1h-18zM84 6h17v1h-17zM85 4h16v2h-16zM86 3h15v1h-15zM87 1h14v2h-14zM88 0h13v1h-13z"/><path fill="#43ddf8" d="M100 13h24v3h-24zM101 0h20v3h-20zM101 3h21v5h-21zM101 8h22v5h-22z"/><path fill="#2ce6fc" d="M121 2h14v1h-14zM121 1h15v1h-15zM121 0h16v1h-16zM122 7h9v1h-9zM122 5h10v2h-10zM122 4h11v1h-11zM122 3h12v1h-12zM123 12h3v1h-3zM123 11h4v1h-4zM123 10h5v1h-5zM123 9h6v1h-6zM123 8h7v1h-7zM124 13h1v1h-1z"/><path fill="#13cded" d="M124 14h18v4h-18zM125 13h17v1h-17zM126 12h16v1h-16zM126 18h16v1h-16zM127 11h15v1h-15zM128 10h14v1h-14zM128 19h14v1h-14zM129 9h13v1h-13zM130 8h12v1h-12zM130 20h12v1h-12zM131 7h11v1h-11zM132 5h10v2h-10zM133 4h9v1h-9zM133 21h9v1h-9zM134 3h8v1h-8zM135 2h7v1h-7zM135 22h7v1h-7zM136 1h6v1h-6zM137 0h5v1h-5zM137 23h5v1h-5zM139 24h3v1h-3zM141 25h1v1h-1z"/><path fill="#ececec" d="M0 28h2v1h-2zM0 27h4v1h-4zM0 26h6v1h-6zM0 25h7v1h-7zM0 24h9v1h-9zM0 23h11v1h-11zM0 10h12v1h-12zM0 22h12v1h-12zM0 21h14v1h-14zM0 20h16v1h-16zM0 19h17v1h-17zM0 17h18v2h-18zM0 15h19v2h-19zM0 14h20v1h-20zM0 12h21v2h-21zM0 11h22v1h-22z"/><path fill="#47c9df" d="M93 40h6v1h-6zM93 39h12v1h-12zM93 38h18v1h-18zM93 37h21v1h-21zM93 36h23v1h-23zM94 35h22v1h-22zM94 33h23v2h-23zM94 30h24v3h-24zM95 28h24v2h-24zM95 26h25v2h-25zM95 24h26v2h-26zM96 23h25v1h-25zM96 21h26v2h-26zM97 19h26v2h-26zM98 18h25v1h-25zM99 17h25v1h-25zM100 16h24v1h-24z"/><path fill="#20bdd9" d="M116 35h26v1h-26zM117 36h9v1h-9zM117 33h25v2h-25zM118 30h24v3h-24zM119 28h23v2h-23zM120 26h22v2h-22zM121 23h16v1h-16zM121 24h18v1h-18zM121 25h20v1h-20zM122 21h11v1h-11zM122 22h13v1h-13zM123 18h3v1h-3zM123 19h5v1h-5zM123 20h7v1h-7z"/><path fill="#d6d6d6" d="M0 49h1v1h-1zM0 48h2v1h-2zM0 47h3v1h-3zM0 45h4v2h-4zM0 44h5v1h-5zM0 43h6v1h-6zM0 42h7v1h-7zM0 41h8v1h-8zM0 39h9v2h-9zM0 38h10v1h-10zM0 37h11v1h-11zM0 35h12v2h-12zM0 34h13v1h-13zM0 33h14v1h-14zM0 31h15v2h-15zM0 30h16v1h-16zM0 29h17v1h-17zM2 28h16v1h-16zM4 27h14v1h-14zM6 26h13v1h-13zM7 25h12v1h-12zM9 24h9v1h-9zM11 23h7v1h-7zM12 22h6v1h-6zM14 21h3v1h-3zM16 20h1v1h-1z"/><path fill="#66c9da" d="M65 33h29v3h-29zM66 36h27v1h-27zM66 31h28v2h-28zM67 37h26v1h-26zM67 30h27v1h-27zM67 28h28v2h-28zM68 38h25v1h-25zM68 27h27v1h-27zM70 39h23v1h-23zM71 40h22v1h-22zM72 41h20v1h-20zM72 26h23v1h-23zM76 25h19v1h-19zM81 24h14v1h-14zM86 23h10v1h-10zM90 22h6v1h-6zM94 21h2v1h-2z"/><path fill="#acd1d8" d="M24 34h17v1h-17zM25 37h14v1h-14zM25 35h15v2h-15zM25 33h17v1h-17zM26 39h11v2h-11zM26 38h12v1h-12zM26 32h16v1h-16zM26 31h17v1h-17zM27 43h7v1h-7zM27 42h8v1h-8zM27 41h9v1h-9zM27 29h17v2h-17zM28 46h4v1h-4zM28 45h5v1h-5zM28 44h6v1h-6zM28 28h17v1h-17zM29 48h1v1h-1zM29 47h2v1h-2zM31 27h14v1h-14zM33 26h11v1h-11zM36 25h8v1h-8zM38 24h5v1h-5zM40 23h3v1h-3z"/><path fill="#c4ccdc" d="M1 49h1v1h-1zM2 48h4v1h-4zM3 47h6v1h-6zM4 46h6v1h-6zM4 45h7v1h-7zM5 44h7v1h-7zM6 43h8v1h-8zM7 42h8v1h-8zM8 41h8v1h-8zM9 40h8v1h-8zM9 39h10v1h-10zM10 38h10v1h-10zM11 37h10v1h-10zM12 36h10v1h-10zM12 35h11v1h-11zM13 34h11v1h-11zM14 33h11v1h-11zM15 31h11v2h-11zM16 30h11v1h-11zM17 29h10v1h-10zM18 27h5v1h-5zM18 28h9v1h-9zM19 26h1v1h-1z"/><path fill="#99cdd6" d="M29 51h4v1h-4zM29 50h8v1h-8zM30 49h12v1h-12zM30 48h17v1h-17zM31 47h20v1h-20zM32 46h21v1h-21zM33 45h21v1h-21zM34 44h22v1h-22zM34 43h23v1h-23zM35 42h23v1h-23zM36 41h23v1h-23zM37 40h23v1h-23zM37 39h24v1h-24zM38 38h24v1h-24zM39 37h24v1h-24zM40 36h24v1h-24zM40 35h25v1h-25zM41 34h24v1h-24zM42 33h23v1h-23zM42 32h24v1h-24zM43 31h23v1h-23zM44 29h23v2h-23zM45 28h22v1h-22z"/><path fill="#b6cdd1" d="M9 47h20v2h-20zM10 46h18v1h-18zM11 45h17v1h-17zM11 49h19v1h-19zM12 44h16v1h-16zM12 50h17v1h-17zM14 43h13v1h-13zM14 51h15v1h-15zM15 42h12v1h-12zM16 41h11v1h-11zM16 52h12v1h-12zM17 40h9v1h-9zM17 53h10v1h-10zM19 54h6v1h-6zM19 39h7v1h-7zM20 38h6v1h-6zM21 37h4v1h-4zM22 36h3v1h-3zM23 35h2v1h-2z"/><path fill="#75bbc7" d="M48 64h6v1h-6zM48 63h12v1h-12zM48 62h17v1h-17zM49 59h18v3h-18zM50 56h18v3h-18zM50 55h19v1h-19zM51 53h18v2h-18zM51 52h19v1h-19zM52 50h18v2h-18zM52 48h19v2h-19zM53 47h18v1h-18zM53 46h19v1h-19zM54 45h18v1h-18zM56 44h16v1h-16zM57 43h16v1h-16zM58 42h15v1h-15zM59 41h13v1h-13zM60 40h11v1h-11zM61 39h9v1h-9zM62 38h6v1h-6zM63 37h4v1h-4zM64 36h2v1h-2z"/><path fill="#2cb1c9" d="M107 63h11v1h-11zM107 62h12v1h-12zM108 61h13v1h-13zM108 60h14v1h-14zM108 59h15v1h-15zM109 58h16v1h-16zM109 57h17v1h-17zM109 56h18v1h-18zM109 55h19v1h-19zM110 64h7v1h-7zM110 54h19v1h-19zM110 53h21v1h-21zM110 52h22v1h-22zM110 51h23v1h-23zM111 48h20v1h-20zM111 49h21v1h-21zM111 50h22v1h-22zM112 44h14v1h-14zM112 45h15v1h-15zM112 46h16v1h-16zM112 47h17v1h-17zM113 40h8v1h-8zM113 41h9v1h-9zM113 42h11v1h-11zM113 43h12v1h-12zM114 37h4v1h-4zM114 38h5v1h-5zM114 39h6v1h-6zM116 36h1v1h-1z"/><path fill="#20b9d3" d="M118 37h24v1h-24zM119 38h23v1h-23zM120 39h22v1h-22zM121 40h21v1h-21zM122 41h20v1h-20zM124 42h18v1h-18zM125 43h17v1h-17zM126 36h16v1h-16zM126 44h16v1h-16zM127 45h15v1h-15zM128 46h14v1h-14zM129 47h13v1h-13zM131 48h11v1h-11zM132 49h7v1h-7zM133 50h2v1h-2z"/><path fill="#46b4c8" d="M82 62h25v2h-25zM82 61h26v1h-26zM83 59h25v2h-25zM84 64h22v1h-22zM84 58h25v1h-25zM85 65h19v1h-19zM85 56h24v2h-24zM86 55h23v1h-23zM86 54h24v1h-24zM87 66h14v1h-14zM87 52h23v2h-23zM88 51h22v1h-22zM88 50h23v1h-23zM89 67h10v1h-10zM89 48h22v2h-22zM90 68h6v1h-6zM90 46h22v2h-22zM91 44h21v2h-21zM91 43h22v1h-22zM92 69h2v1h-2zM92 41h21v2h-21zM99 40h14v1h-14zM105 39h9v1h-9zM111 38h3v1h-3z"/><path fill="#68bbc9" d="M67 61h15v2h-15zM67 59h16v2h-16zM68 58h16v1h-16zM68 56h17v2h-17zM69 54h17v2h-17zM69 53h18v1h-18zM70 52h17v1h-17zM70 50h18v2h-18zM71 63h9v1h-9zM71 48h18v2h-18zM71 47h19v1h-19zM72 46h18v1h-18zM72 44h19v2h-19zM73 43h18v1h-18zM73 42h19v1h-19zM75 64h1v1h-1z"/><path fill="#95b9bf" d="M18 72h18v1h-18zM18 71h20v1h-20zM19 73h15v1h-15zM19 70h21v1h-21zM19 69h23v1h-23zM20 68h24v1h-24zM20 67h25v1h-25zM21 74h11v1h-11zM21 66h25v1h-25zM21 64h27v2h-27zM22 75h8v1h-8zM22 62h26v2h-26zM23 76h5v1h-5zM23 59h26v3h-26zM24 57h26v2h-26zM25 77h1v1h-1zM25 55h25v2h-25zM25 54h26v1h-26zM27 53h24v1h-24zM28 52h23v1h-23zM33 51h19v1h-19zM37 50h15v1h-15zM42 49h10v1h-10zM47 48h5v1h-5zM51 47h2v1h-2z"/><path fill="#bec3c4" d="M0 60h1v1h-1zM0 59h11v1h-11zM0 50h12v1h-12zM0 51h14v1h-14zM0 52h16v1h-16zM0 58h16v1h-16zM0 53h17v1h-17zM0 57h17v1h-17zM0 54h19v1h-19zM0 56h19v1h-19zM0 55h21v1h-21zM2 49h9v1h-9zM6 48h3v1h-3z"/><path fill="#1aa2b9" d="M116 65h26v2h-26zM117 64h25v1h-25zM117 67h25v2h-25zM118 63h24v1h-24zM118 69h24v2h-24zM119 62h23v1h-23zM119 71h23v1h-23zM120 73h9v1h-9zM120 72h16v1h-16zM121 74h1v1h-1zM121 61h21v1h-21zM122 60h20v1h-20zM123 59h19v1h-19zM125 58h17v1h-17zM126 57h16v1h-16zM127 56h15v1h-15zM128 55h14v1h-14zM129 54h13v1h-13zM131 53h11v1h-11zM132 52h10v1h-10zM133 51h9v1h-9zM135 50h7v1h-7zM139 49h3v1h-3z"/><path fill="#b0b6b7" d="M0 77h2v1h-2zM0 76h5v1h-5zM0 75h9v1h-9zM0 74h12v1h-12zM0 73h15v1h-15zM0 71h18v2h-18zM0 69h19v2h-19zM0 68h20v1h-20zM2 67h18v1h-18zM3 66h18v1h-18zM5 65h16v1h-16zM7 64h14v1h-14zM8 63h14v1h-14zM10 62h12v1h-12zM11 61h12v1h-12zM12 60h11v1h-11zM14 59h9v1h-9zM16 58h8v1h-8zM17 57h7v1h-7zM19 56h6v1h-6zM21 55h4v1h-4z"/><path fill="#bebebe" d="M0 67h2v1h-2zM0 66h3v1h-3zM0 65h5v1h-5zM0 64h7v1h-7zM0 63h8v1h-8zM0 62h10v1h-10zM0 61h11v1h-11zM1 60h11v1h-11zM11 59h3v1h-3z"/><path fill="#72a8b1" d="M44 69h27v1h-27zM44 68h28v1h-28zM45 72h23v1h-23zM45 71h24v1h-24zM45 70h25v1h-25zM45 67h28v1h-28zM46 75h19v1h-19zM46 74h20v1h-20zM46 73h21v1h-21zM46 66h28v1h-28zM47 78h14v1h-14zM47 77h15v1h-15zM47 76h16v1h-16zM48 81h10v1h-10zM48 80h11v1h-11zM48 79h12v1h-12zM48 65h27v1h-27zM49 83h6v1h-6zM49 82h7v1h-7zM50 85h1v1h-1zM50 84h4v1h-4zM54 64h21v1h-21zM60 63h11v1h-11zM65 62h2v1h-2z"/><path fill="#5f9faa" d="M54 84h31v2h-31zM55 83h31v1h-31zM56 86h28v1h-28zM56 82h30v1h-30zM57 87h26v1h-26zM58 88h25v1h-25zM58 81h29v1h-29zM59 89h21v1h-21zM59 80h28v1h-28zM60 79h28v1h-28zM61 90h17v1h-17zM61 78h27v1h-27zM62 91h13v1h-13zM62 77h27v1h-27zM63 76h26v1h-26zM64 92h9v1h-9zM65 93h5v1h-5zM65 75h25v1h-25zM66 94h1v1h-1zM66 74h24v1h-24zM67 73h24v1h-24zM68 72h23v1h-23zM69 71h23v1h-23zM70 70h22v1h-22zM71 69h21v1h-21zM72 68h18v1h-18zM73 67h16v1h-16zM74 66h13v1h-13zM75 65h10v1h-10zM76 64h8v1h-8zM80 63h2v1h-2z"/><path fill="#3699aa" d="M83 88h24v1h-24zM83 87h26v1h-26zM84 86h27v1h-27zM85 89h20v1h-20zM85 85h28v1h-28zM85 84h30v1h-30zM86 90h17v1h-17zM86 83h31v1h-31zM86 82h32v1h-32zM87 80h31v2h-31zM88 78h31v2h-31zM89 76h31v2h-31zM90 91h11v1h-11zM90 75h30v1h-30zM90 74h31v1h-31zM91 72h29v2h-29zM92 70h26v1h-26zM92 71h27v1h-27zM94 69h24v1h-24zM96 68h21v1h-21zM99 67h18v1h-18zM101 66h15v1h-15zM104 65h12v1h-12zM106 64h4v1h-4z"/><path fill="#7fa2a9" d="M18 87h29v1h-29zM18 86h30v1h-30zM18 85h32v1h-32zM19 88h11v1h-11zM19 84h31v1h-31zM20 83h29v1h-29zM21 82h28v1h-28zM22 81h26v1h-26zM23 80h25v1h-25zM24 78h23v1h-23zM24 79h24v1h-24zM26 77h21v1h-21zM28 76h19v1h-19zM30 75h16v1h-16zM32 74h14v1h-14zM34 73h12v1h-12zM36 72h9v1h-9zM38 71h7v1h-7zM40 70h5v1h-5zM42 69h2v1h-2z"/><path fill="#1992a8" d="M118 80h24v4h-24zM119 78h23v2h-23zM120 75h22v3h-22zM120 84h22v1h-22zM122 74h20v1h-20zM129 73h13v1h-13zM129 85h13v1h-13zM136 72h6v1h-6zM138 86h4v1h-4z"/><path fill="#a8a8a8" d="M0 92h2v1h-2zM0 91h5v1h-5zM0 90h7v1h-7zM0 89h9v1h-9zM0 88h12v1h-12zM0 87h14v1h-14zM0 86h16v1h-16zM0 85h18v1h-18zM0 84h19v1h-19zM0 83h20v1h-20zM0 82h21v1h-21zM0 81h22v1h-22zM0 80h23v1h-23zM0 78h24v2h-24zM2 77h23v1h-23zM5 76h18v1h-18zM9 75h13v1h-13zM12 74h9v1h-9zM15 73h4v1h-4z"/><path fill="#2a8a9b" d="M99 92h22v2h-22zM100 94h21v1h-21zM100 95h22v2h-22zM101 91h19v1h-19zM101 97h21v1h-21zM101 98h22v2h-22zM102 100h21v1h-21zM102 101h22v2h-22zM103 90h17v1h-17zM103 105h20v1h-20zM103 103h21v1h-21zM103 104h22v1h-22zM104 107h17v1h-17zM104 106h18v1h-18zM105 110h12v1h-12zM105 109h13v1h-13zM105 89h15v1h-15zM105 108h15v1h-15zM106 112h8v1h-8zM106 111h9v1h-9zM107 114h4v1h-4zM107 113h6v1h-6zM107 88h13v1h-13zM108 115h2v1h-2zM109 87h10v1h-10zM111 86h8v1h-8zM113 85h6v1h-6zM115 84h3v1h-3zM117 83h1v1h-1z"/><path fill="#1b8da0" d="M118 84h2v1h-2zM119 85h10v1h-10zM119 86h19v1h-19zM119 87h23v1h-23zM120 88h22v4h-22zM121 92h21v3h-21zM122 97h18v1h-18zM122 95h20v2h-20zM123 100h11v1h-11zM123 99h13v1h-13zM123 98h15v1h-15zM124 103h3v1h-3zM124 102h5v1h-5zM124 101h7v1h-7z"/><path fill="#6d949b" d="M28 104h26v1h-26zM28 103h28v1h-28zM29 105h24v1h-24zM29 102h28v1h-28zM30 101h28v1h-28zM31 100h29v1h-29zM32 106h20v1h-20zM33 99h28v1h-28zM34 98h28v1h-28zM35 107h15v1h-15zM35 97h28v1h-28zM36 96h29v1h-29zM37 95h29v1h-29zM38 108h11v1h-11zM39 94h27v1h-27zM40 93h25v1h-25zM41 109h6v1h-6zM41 92h23v1h-23zM42 91h20v1h-20zM43 90h18v1h-18zM44 110h2v1h-2zM44 89h15v1h-15zM45 88h13v1h-13zM47 87h10v1h-10zM48 86h8v1h-8zM51 85h3v1h-3z"/><path fill="#969696" d="M0 107h2v1h-2zM0 106h4v1h-4zM0 105h6v1h-6zM0 104h8v1h-8zM0 103h10v1h-10zM0 102h12v1h-12zM0 101h14v1h-14zM0 98h15v3h-15zM0 96h16v2h-16zM0 93h17v3h-17zM2 92h16v1h-16zM5 91h13v1h-13zM7 90h12v1h-12zM9 89h10v1h-10zM12 88h7v1h-7zM14 87h4v1h-4zM16 86h2v1h-2z"/><path fill="#80999e" d="M14 101h16v1h-16zM15 100h16v1h-16zM15 99h18v1h-18zM15 98h19v1h-19zM16 97h19v1h-19zM16 96h20v1h-20zM17 95h20v1h-20zM17 94h22v1h-22zM17 93h23v1h-23zM18 92h23v1h-23zM18 91h24v1h-24zM19 90h24v1h-24zM19 89h25v1h-25zM23 102h6v1h-6zM30 88h15v1h-15z"/><path fill="#4d8791" d="M41 119h31v1h-31zM41 118h32v1h-32zM42 116h32v2h-32zM43 120h29v1h-29zM43 115h32v1h-32zM44 113h32v2h-32zM45 111h32v2h-32zM46 110h32v1h-32zM47 109h31v1h-31zM49 121h22v1h-22zM49 108h30v1h-30zM50 107h30v1h-30zM52 106h28v1h-28zM53 105h28v1h-28zM54 104h27v1h-27zM56 122h12v1h-12zM56 103h26v1h-26zM57 102h25v1h-25zM58 101h25v1h-25zM60 100h23v1h-23zM61 99h23v1h-23zM62 123h3v1h-3zM62 98h22v1h-22zM63 97h22v1h-22zM65 96h20v1h-20zM66 95h20v1h-20zM67 94h19v1h-19zM70 93h17v1h-17zM73 92h14v1h-14zM75 91h12v1h-12zM78 90h8v1h-8zM80 89h5v1h-5z"/><path fill="#3e8592" d="M71 121h1v1h-1zM72 120h10v1h-10zM72 119h20v1h-20zM73 118h29v1h-29zM74 117h33v1h-33zM74 116h34v1h-34zM75 115h33v1h-33zM76 113h31v2h-31zM77 111h29v2h-29zM78 109h27v2h-27zM79 108h26v1h-26zM80 106h24v2h-24zM81 104h22v2h-22zM82 102h20v1h-20zM82 103h21v1h-21zM83 100h19v2h-19zM84 98h17v2h-17zM85 96h15v1h-15zM85 97h16v1h-16zM86 94h14v2h-14zM87 91h3v1h-3zM87 92h12v2h-12z"/><path fill="#0b7789" d="M107 117h35v4h-35zM108 116h34v1h-34zM108 121h34v7h-34zM109 128h33v4h-33zM110 115h32v1h-32zM111 114h31v1h-31zM112 132h28v1h-28zM113 113h29v1h-29zM114 112h28v1h-28zM115 111h27v1h-27zM117 110h25v1h-25zM118 109h24v1h-24zM120 108h22v1h-22zM121 107h21v1h-21zM122 106h20v1h-20zM123 105h19v1h-19zM125 104h17v1h-17zM127 103h15v1h-15zM129 102h13v1h-13zM131 101h11v1h-11zM134 100h8v1h-8zM136 99h6v1h-6zM138 98h4v1h-4zM140 97h2v1h-2z"/><path fill="#858b8c" d="M0 117h2v1h-2zM0 116h6v1h-6zM0 115h8v1h-8zM0 114h10v1h-10zM0 113h13v1h-13zM0 112h15v1h-15zM0 111h17v1h-17zM0 110h19v1h-19zM0 109h21v1h-21zM0 108h23v1h-23zM2 107h23v1h-23zM4 106h23v1h-23zM6 105h23v1h-23zM8 104h20v1h-20zM10 103h18v1h-18zM12 102h11v1h-11z"/><path fill="#7a8486" d="M6 116h36v2h-36zM7 118h34v1h-34zM8 119h33v1h-33zM8 115h35v1h-35zM9 120h31v1h-31zM10 121h29v1h-29zM10 114h34v1h-34zM11 122h26v1h-26zM12 123h24v1h-24zM13 124h21v1h-21zM13 113h31v1h-31zM14 125h16v1h-16zM15 126h11v1h-11zM15 112h30v1h-30zM16 127h6v1h-6zM17 111h28v1h-28zM19 110h25v1h-25zM21 109h20v1h-20zM23 108h15v1h-15zM25 107h10v1h-10zM27 106h5v1h-5z"/><path fill="#808080" d="M0 133h1v1h-1zM0 132h4v1h-4zM0 118h7v1h-7zM0 119h8v1h-8zM0 131h8v1h-8zM0 120h9v1h-9zM0 121h10v1h-10zM0 122h11v1h-11zM0 130h11v1h-11zM0 123h12v1h-12zM0 124h13v1h-13zM0 125h14v1h-14zM0 129h14v1h-14zM0 126h15v1h-15zM0 127h16v1h-16zM0 128h17v1h-17zM2 117h4v1h-4z"/><path fill="#3f6286" d="M52 140h41v1h-41zM52 139h44v1h-44zM52 138h46v1h-46zM52 137h48v1h-48zM52 136h50v1h-50zM52 135h52v1h-52zM52 134h54v1h-54zM52 133h55v1h-55zM52 131h57v2h-57zM53 142h36v1h-36zM53 141h38v1h-38zM53 130h56v1h-56zM54 143h33v1h-33zM55 144h30v1h-30zM55 129h54v1h-54zM56 145h15v1h-15zM56 128h53v1h-53zM58 127h50v1h-50zM60 126h48v1h-48zM61 125h47v1h-47zM63 124h45v1h-45zM65 123h43v1h-43zM68 122h40v1h-40zM72 121h36v1h-36zM82 120h25v1h-25zM92 119h15v1h-15zM102 118h5v1h-5z"/><path fill="#566a90" d="M35 124h28v1h-28zM36 123h26v1h-26zM37 122h19v1h-19zM37 125h24v1h-24zM38 126h22v1h-22zM39 121h10v1h-10zM40 120h3v1h-3zM40 127h18v1h-18zM43 128h13v1h-13zM46 129h9v1h-9zM50 130h3v1h-3z"/><path fill="#6a6a6a" d="M0 145h2v1h-2zM0 144h5v1h-5zM0 143h7v1h-7zM0 142h9v1h-9zM0 141h12v1h-12zM0 140h14v1h-14zM0 139h16v1h-16zM0 138h18v1h-18zM0 137h20v1h-20zM0 136h22v1h-22zM0 135h24v1h-24zM0 134h26v1h-26zM1 133h27v1h-27zM4 132h26v1h-26zM8 131h24v1h-24zM11 130h23v1h-23zM14 129h22v1h-22zM17 128h20v1h-20zM22 127h17v1h-17zM26 126h12v1h-12zM30 125h7v1h-7zM34 124h1v1h-1z"/><path fill="#646868" d="M0 149h6v1h-6zM0 148h11v1h-11zM0 147h16v1h-16zM0 146h22v1h-22zM2 145h25v1h-25zM5 144h27v1h-27zM7 143h29v1h-29zM9 142h32v1h-32zM12 141h34v1h-34zM14 140h37v1h-37zM16 139h36v1h-36zM18 138h34v1h-34zM20 137h32v1h-32zM22 136h30v1h-30zM24 135h28v1h-28zM26 134h26v1h-26zM28 133h24v1h-24zM30 132h22v1h-22zM32 131h20v1h-20zM34 130h16v1h-16zM36 129h10v1h-10zM37 128h6v1h-6zM39 127h1v1h-1z"/><path fill="#13535e" d="M85 144h50v3h-50zM86 147h48v1h-48zM87 148h47v1h-47zM87 143h48v1h-48zM88 149h46v1h-46zM89 150h45v1h-45zM89 142h47v1h-47zM90 151h43v1h-43zM91 152h42v1h-42zM91 141h45v1h-45zM92 153h41v1h-41zM93 154h39v1h-39zM93 140h43v1h-43zM94 155h38v1h-38zM95 156h37v1h-37zM96 139h40v1h-40zM97 157h34v1h-34zM98 138h39v1h-39zM100 158h31v1h-31zM100 137h37v1h-37zM102 136h35v1h-35zM104 159h24v1h-24zM104 135h33v1h-33zM106 134h31v1h-31zM107 160h19v1h-19zM107 133h31v1h-31zM109 132h3v1h-3zM110 161h14v1h-14zM114 162h8v1h-8zM117 163h2v1h-2z"/><path fill="#08525f" d="M131 157h9v1h-9zM132 154h10v3h-10zM133 151h9v3h-9zM134 147h8v4h-8zM135 143h7v4h-7zM136 139h6v4h-6zM137 134h5v5h-5zM138 133h4v1h-4zM140 132h2v1h-2z"/><path fill="#606060" d="M0 159h3v1h-3zM0 158h8v1h-8zM0 157h12v1h-12zM0 156h16v1h-16zM0 155h20v1h-20zM0 154h24v1h-24zM0 153h28v1h-28zM0 152h32v1h-32zM0 151h36v1h-36zM0 150h39v1h-39zM6 149h37v1h-37zM11 148h35v1h-35zM16 147h34v1h-34zM22 146h31v1h-31zM27 145h29v1h-29zM32 144h23v1h-23zM36 143h18v1h-18zM41 142h12v1h-12zM46 141h7v1h-7zM51 140h1v1h-1z"/><path fill="#3d4d50" d="M19 172h19v1h-19zM20 171h21v1h-21zM20 170h23v1h-23zM20 169h25v1h-25zM21 168h26v1h-26zM21 167h28v1h-28zM21 166h30v1h-30zM23 165h30v1h-30zM26 173h10v1h-10zM26 164h28v1h-28zM28 163h28v1h-28zM30 162h28v1h-28zM32 161h28v1h-28zM33 174h1v1h-1zM34 160h27v1h-27zM36 159h27v1h-27zM38 158h26v1h-26zM40 157h26v1h-26zM42 156h25v1h-25zM43 155h26v1h-26zM45 154h25v1h-25zM47 153h25v1h-25zM49 152h24v1h-24zM50 151h25v1h-25zM52 150h24v1h-24zM54 149h23v1h-23zM55 148h23v1h-23zM57 147h23v1h-23zM58 146h23v1h-23zM71 145h11v1h-11z"/><path fill="#344b4f" d="M34 177h10v1h-10zM34 176h20v1h-20zM34 175h21v1h-21zM34 174h22v1h-22zM36 173h22v1h-22zM38 172h21v1h-21zM41 171h19v1h-19zM43 170h19v1h-19zM45 169h18v1h-18zM47 168h17v1h-17zM49 167h16v1h-16zM51 166h15v1h-15zM53 165h14v1h-14zM54 164h14v1h-14zM56 163h14v1h-14zM58 162h13v1h-13zM60 161h12v1h-12zM61 160h12v1h-12zM63 159h10v1h-10zM64 158h10v1h-10zM66 157h9v1h-9zM67 156h9v1h-9zM69 155h8v1h-8zM70 154h8v1h-8zM72 153h7v1h-7zM73 152h7v1h-7zM75 151h5v1h-5zM76 150h5v1h-5zM77 149h5v1h-5zM78 148h5v1h-5zM80 147h3v1h-3zM81 146h3v1h-3zM82 145h3v1h-3z"/><path fill="#535353" d="M0 170h2v1h-2zM0 169h7v1h-7zM0 168h12v1h-12zM0 167h17v1h-17zM0 166h21v1h-21zM0 165h23v1h-23zM0 164h26v1h-26zM0 163h28v1h-28zM0 162h30v1h-30zM0 161h32v1h-32zM0 160h34v1h-34zM3 159h33v1h-33zM8 158h30v1h-30zM12 157h28v1h-28zM16 156h26v1h-26zM20 155h23v1h-23zM24 154h21v1h-21zM28 153h19v1h-19zM32 152h17v1h-17zM36 151h14v1h-14zM39 150h13v1h-13zM43 149h11v1h-11zM46 148h9v1h-9zM50 147h7v1h-7zM53 146h5v1h-5z"/><path fill="#2b4a4f" d="M54 176h20v1h-20zM55 175h20v1h-20zM56 174h20v1h-20zM58 173h20v1h-20zM59 172h20v1h-20zM60 171h20v1h-20zM62 170h19v1h-19zM63 169h19v1h-19zM64 168h19v1h-19zM65 167h20v1h-20zM66 166h20v1h-20zM67 165h20v1h-20zM68 164h20v1h-20zM70 163h19v1h-19zM71 162h19v1h-19zM72 161h19v1h-19zM73 160h19v1h-19zM73 159h20v1h-20zM74 158h19v1h-19zM75 157h19v1h-19zM76 156h19v1h-19zM77 155h17v1h-17zM78 154h15v1h-15zM79 153h13v1h-13zM80 151h10v1h-10zM80 152h11v1h-11zM81 150h8v1h-8zM82 149h6v1h-6zM83 147h3v1h-3zM83 148h4v1h-4zM84 146h1v1h-1z"/><path fill="#204850" d="M74 176h7v1h-7zM75 175h16v1h-16zM76 174h19v1h-19zM78 173h19v1h-19zM79 172h21v1h-21zM80 171h22v1h-22zM81 170h24v1h-24zM82 169h25v1h-25zM83 168h27v1h-27zM85 167h27v1h-27zM86 166h28v1h-28zM87 165h29v1h-29zM88 164h30v1h-30zM89 163h28v1h-28zM90 162h24v1h-24zM91 161h19v1h-19zM92 160h15v1h-15zM93 158h7v1h-7zM93 159h11v1h-11zM94 157h3v1h-3z"/><path fill="#074b57" d="M118 164h24v1h-24zM119 163h23v1h-23zM121 165h21v1h-21zM122 162h20v1h-20zM124 161h18v1h-18zM124 166h18v1h-18zM126 160h16v1h-16zM127 167h15v1h-15zM128 159h14v1h-14zM130 168h12v1h-12zM131 158h11v1h-11zM133 169h9v1h-9zM136 170h6v1h-6zM140 157h2v1h-2z"/><path fill="#14424a" d="M93 175h33v1h-33zM95 174h34v1h-34zM97 173h35v1h-35zM100 172h35v1h-35zM102 171h35v1h-35zM105 176h17v1h-17zM105 170h31v1h-31zM107 169h26v1h-26zM110 168h20v1h-20zM112 167h15v1h-15zM114 166h10v1h-10zM116 165h5v1h-5z"/><path fill="#4a4a4a" d="M0 177h2v1h-2zM0 176h6v1h-6zM0 175h9v1h-9zM0 174h13v1h-13zM0 173h16v1h-16zM0 172h19v1h-19zM0 171h20v1h-20zM2 170h18v1h-18zM7 169h13v1h-13zM12 168h9v1h-9zM17 167h4v1h-4z"/><path fill="#0c3b43" d="M102 188h38v1h-38zM103 187h39v1h-39zM104 186h38v1h-38zM106 185h36v1h-36zM107 189h25v1h-25zM108 184h34v1h-34zM110 183h32v1h-32zM112 182h30v1h-30zM113 181h29v1h-29zM115 180h27v1h-27zM116 190h1v1h-1zM117 179h25v1h-25zM118 178h24v1h-24zM120 177h22v1h-22zM122 176h20v1h-20zM126 175h16v1h-16zM129 174h13v1h-13zM132 173h10v1h-10zM135 172h7v1h-7zM137 171h5v1h-5z"/><path fill="#424647" d="M0 180h2v1h-2zM0 179h24v1h-24zM0 178h33v1h-33zM2 177h32v1h-32zM6 176h28v1h-28zM9 175h25v1h-25zM13 174h20v1h-20zM16 173h10v1h-10z"/><path fill="#1c3c42" d="M59 192h6v1h-6zM60 191h16v1h-16zM62 190h25v1h-25zM63 189h34v1h-34zM64 188h38v1h-38zM65 187h38v1h-38zM66 186h38v1h-38zM67 185h36v1h-36zM68 184h34v1h-34zM69 183h32v1h-32zM70 182h30v1h-30zM71 180h27v1h-27zM71 181h28v1h-28zM72 179h25v1h-25zM73 178h23v1h-23zM74 177h21v1h-21zM81 176h13v1h-13zM91 175h2v1h-2z"/><path fill="#163d46" d="M94 176h11v1h-11zM95 177h25v1h-25zM96 178h22v1h-22zM97 179h20v1h-20zM98 180h17v1h-17zM99 181h14v1h-14zM100 182h12v1h-12zM101 183h9v1h-9zM102 184h6v1h-6zM103 185h3v1h-3z"/><path fill="#323d3f" d="M10 186h27v1h-27zM12 185h28v1h-28zM15 184h27v1h-27zM18 183h26v1h-26zM21 182h26v1h-26zM24 181h25v1h-25zM27 180h24v1h-24zM30 179h23v1h-23zM33 178h22v1h-22zM44 177h13v1h-13z"/><path fill="#2c3c3f" d="M35 187h30v1h-30zM36 188h28v1h-28zM37 189h26v1h-26zM37 186h29v1h-29zM38 190h24v1h-24zM39 191h21v1h-21zM40 193h17v1h-17zM40 192h19v1h-19zM40 185h27v1h-27zM41 194h9v1h-9zM42 195h1v1h-1zM42 184h26v1h-26zM44 183h25v1h-25zM47 182h23v1h-23zM49 181h22v1h-22zM51 180h20v1h-20zM53 179h19v1h-19zM55 178h18v1h-18zM57 177h17v1h-17z"/><path fill="#424242" d="M0 187h2v1h-2zM0 186h8v1h-8zM0 185h12v1h-12zM0 184h15v1h-15zM0 183h18v1h-18zM0 182h21v1h-21zM0 181h24v1h-24zM2 180h25v1h-25zM24 179h6v1h-6z"/><path fill="#383838" d="M0 199h6v1h-6zM0 197h8v2h-8zM0 195h9v2h-9zM0 193h10v2h-10zM0 191h11v2h-11zM0 189h12v2h-12zM0 188h13v1h-13zM2 187h11v1h-11zM8 186h2v1h-2z"/><path fill="#33393b" d="M8 198h9v1h-9zM8 197h19v1h-19zM9 196h27v1h-27zM9 195h33v1h-33zM10 193h30v1h-30zM10 194h31v1h-31zM11 191h28v1h-28zM11 192h29v1h-29zM12 189h25v1h-25zM12 190h26v1h-26zM13 187h22v1h-22zM13 188h23v1h-23z"/><path fill="#042b31" d="M128 190h14v2h-14zM129 192h13v4h-13zM130 196h12v3h-12zM131 199h11v3h-11zM132 189h10v1h-10zM132 202h10v1h-10zM140 188h2v1h-2z"/><path fill="#162d31" d="M55 194h55v1h-55zM57 195h51v1h-51zM57 193h55v1h-55zM59 196h48v1h-48zM61 197h44v1h-44zM63 198h40v1h-40zM65 199h36v1h-36zM65 192h48v1h-48zM67 200h29v1h-29zM70 201h22v1h-22zM72 202h15v1h-15zM75 203h7v1h-7zM76 191h39v1h-39zM87 190h29v1h-29zM97 189h10v1h-10z"/><path fill="#0b2a30" d="M102 199h29v1h-29zM103 198h27v1h-27zM105 197h25v1h-25zM107 196h23v1h-23zM107 200h24v1h-24zM108 195h21v1h-21zM110 194h19v1h-19zM112 193h17v1h-17zM113 192h16v1h-16zM113 201h18v1h-18zM115 191h13v1h-13zM117 190h11v1h-11zM119 202h13v1h-13zM125 203h6v1h-6z"/><path fill="#1d2a2c" d="M30 212h6v1h-6zM31 211h14v1h-14zM31 210h22v1h-22zM31 209h30v1h-30zM32 208h36v1h-36zM32 207h38v1h-38zM32 206h41v1h-41zM33 203h42v1h-42zM33 205h42v1h-42zM33 204h44v1h-44zM34 200h33v1h-33zM34 201h36v1h-36zM34 202h38v1h-38zM35 199h30v1h-30zM36 198h27v1h-27zM37 197h24v1h-24zM38 196h21v1h-21zM43 195h14v1h-14zM50 194h5v1h-5z"/><path fill="#282828" d="M0 208h3v1h-3zM0 207h7v1h-7zM0 206h12v1h-12zM0 205h16v1h-16zM0 204h20v1h-20zM0 203h23v1h-23zM0 202h27v1h-27zM0 201h30v1h-30zM0 200h34v1h-34zM6 199h29v1h-29zM17 198h19v1h-19zM27 197h10v1h-10zM36 196h2v1h-2z"/><path fill="#0e282c" d="M68 208h7v1h-7zM70 207h37v1h-37zM73 206h42v1h-42zM75 205h47v1h-47zM77 204h49v1h-49zM82 203h43v1h-43zM87 202h32v1h-32zM92 201h21v1h-21zM96 200h11v1h-11zM101 199h1v1h-1z"/><path fill="#252828" d="M0 214h9v1h-9zM0 213h21v1h-21zM0 212h30v1h-30zM0 209h31v3h-31zM3 208h29v1h-29zM7 207h25v1h-25zM12 206h20v1h-20zM16 205h17v1h-17zM20 204h13v1h-13zM23 203h10v1h-10zM27 202h7v1h-7zM30 201h4v1h-4z"/><path fill="#032227" d="M122 205h20v1h-20zM124 206h18v1h-18zM126 204h16v1h-16zM126 207h16v1h-16zM129 208h13v1h-13zM131 203h11v1h-11zM132 209h10v1h-10zM135 210h7v1h-7zM138 211h4v1h-4zM141 212h1v1h-1z"/><path fill="#082025" d="M100 208h29v1h-29zM101 209h31v1h-31zM102 210h33v1h-33zM103 211h35v1h-35zM104 212h37v1h-37zM105 213h25v1h-25zM106 214h5v1h-5zM107 207h19v1h-19zM115 206h9v1h-9z"/><path fill="#0f1f22" d="M36 212h68v1h-68zM38 213h67v1h-67zM40 214h66v1h-66zM43 215h59v1h-59zM45 211h58v1h-58zM47 216h50v1h-50zM53 210h49v1h-49zM61 209h40v1h-40zM69 217h22v1h-22zM75 208h25v1h-25z"/><path fill="#1a1a1a" d="M0 223h7v1h-7zM0 222h14v1h-14zM0 221h20v1h-20zM0 220h26v1h-26zM0 219h31v1h-31zM0 218h36v1h-36zM0 217h40v1h-40zM0 215h43v1h-43zM0 216h45v1h-45zM9 214h31v1h-31zM21 213h17v1h-17z"/><path fill="#061a1e" d="M85 219h57v2h-57zM86 218h56v1h-56zM91 217h51v1h-51zM97 216h45v1h-45zM102 215h40v1h-40zM111 214h31v1h-31zM114 221h28v1h-28zM130 213h12v1h-12z"/><path fill="#13191a" d="M0 225h8v1h-8zM0 224h50v1h-50zM7 223h53v1h-53zM14 222h55v1h-55zM20 221h58v1h-58zM26 220h59v1h-59zM31 219h54v1h-54zM36 218h50v1h-50zM40 217h29v1h-29zM45 216h2v1h-2z"/><path fill="#0a1416" d="M48 227h63v1h-63zM49 226h79v1h-79zM49 225h93v1h-93zM50 224h92v1h-92zM60 223h82v1h-82zM69 222h73v1h-73zM78 221h36v1h-36z"/><path fill="#121212" d="M0 231h4v1h-4zM0 230h18v1h-18zM0 229h30v1h-30zM0 228h41v1h-41zM0 227h48v1h-48zM0 226h49v1h-49zM8 225h41v1h-41z"/><path fill="#050e0f" d="M70 232h72v1h-72zM73 233h69v1h-69zM74 231h68v1h-68zM75 234h67v1h-67zM83 230h59v1h-59zM91 229h51v1h-51zM91 235h51v1h-51zM98 228h44v1h-44zM111 227h31v1h-31zM113 236h14v1h-14zM128 226h14v1h-14z"/><path fill="#0b1011" d="M0 232h28v1h-28zM4 231h70v1h-70zM18 230h65v1h-65zM30 229h61v1h-61zM41 228h57v1h-57z"/><path fill="#0a0c0d" d="M0 235h19v1h-19zM0 233h73v1h-73zM0 234h75v1h-75zM28 232h42v1h-42z"/><path fill="#0a0a0a" d="M0 239h44v1h-44zM0 238h76v1h-76zM0 237h101v1h-101zM0 236h113v1h-113zM19 235h72v1h-72z"/><path fill="#000404" d="M0 240h142v4h-142zM44 239h98v1h-98zM76 238h66v1h-66zM101 237h41v1h-41zM127 236h15v1h-15z"/><path fill="#000101" d="M0 244h142v2h-142z"/><path fill="#000000" d="M0 246h142v9h-142z"/></svg>
<div class="b" style="left:1173px;top:309px;width:11px;height:11px;border:1px solid #f0f0f0;border-radius:6px"></div>
<svg style="left:1238px;top:126px;overflow:hidden" width="19" height="255" shape-rendering="crispEdges"><rect x="0" y="0.0" width="19" height="9.0" fill="rgb(255,42,53)"/><rect x="0" y="8.5" width="19" height="9.0" fill="rgb(255,30,94)"/><rect x="0" y="17.0" width="19" height="9.0" fill="rgb(255,18,136)"/><rect x="0" y="25.5" width="19" height="9.0" fill="rgb(255,27,179)"/><rect x="0" y="34.0" width="19" height="9.0" fill="rgb(255,40,222)"/><rect x="0" y="42.5" width="19" height="9.0" fill="rgb(240,47,248)"/><rect x="0" y="51.0" width="19" height="9.0" fill="rgb(201,46,248)"/><rect x="0" y="59.5" width="19" height="9.0" fill="rgb(163,45,248)"/><rect x="0" y="68.0" width="19" height="9.0" fill="rgb(123,46,247)"/><rect x="0" y="76.5" width="19" height="9.0" fill="rgb(80,50,244)"/><rect x="0" y="85.0" width="19" height="9.0" fill="rgb(37,55,241)"/><rect x="0" y="93.5" width="19" height="9.0" fill="rgb(30,77,244)"/><rect x="0" y="102.0" width="19" height="9.0" fill="rgb(38,107,251)"/><rect x="0" y="110.5" width="19" height="9.0" fill="rgb(45,139,255)"/><rect x="0" y="119.0" width="19" height="9.0" fill="rgb(46,175,255)"/><rect x="0" y="127.5" width="19" height="9.0" fill="rgb(46,206,246)"/><rect x="0" y="136.0" width="19" height="9.0" fill="rgb(39,218,201)"/><rect x="0" y="144.5" width="19" height="9.0" fill="rgb(33,228,156)"/><rect x="0" y="153.0" width="19" height="9.0" fill="rgb(42,233,114)"/><rect x="0" y="161.5" width="19" height="9.0" fill="rgb(51,237,73)"/><rect x="0" y="170.0" width="19" height="9.0" fill="rgb(73,240,48)"/><rect x="0" y="178.5" width="19" height="9.0" fill="rgb(114,240,48)"/><rect x="0" y="187.0" width="19" height="9.0" fill="rgb(156,240,48)"/><rect x="0" y="195.5" width="19" height="9.0" fill="rgb(193,240,48)"/><rect x="0" y="204.0" width="19" height="9.0" fill="rgb(230,240,48)"/><rect x="0" y="212.5" width="19" height="9.0" fill="rgb(255,230,46)"/><rect x="0" y="221.0" width="19" height="9.0" fill="rgb(255,197,39)"/><rect x="0" y="229.5" width="19" height="9.0" fill="rgb(255,163,33)"/><rect x="0" y="238.0" width="19" height="9.0" fill="rgb(255,93,32)"/><rect x="0" y="246.5" width="19" height="9.0" fill="rgb(255,48,32)"/></svg>
<svg style="left:1228px;top:240px" width="8" height="10" viewBox="0 0 8 10"><path d="M1 1.2H3.6L7 5L3.6 8.8H1Z" fill="#f2f2f2" stroke="#333" stroke-width="0.6"/></svg>
<div class="b" style="left:1034px;top:390px;width:232px;height:345px;background:#535353"></div>
<div class="b" style="left:1034px;top:390px;width:232px;height:27px;background:#424242"></div>
<div class="b" style="left:1034px;top:390px;width:51px;height:28px;background:#535353"></div>
<div class="b" style="left:1085px;top:390px;width:65px;height:27px;background:#444;border-right:1px solid #383838;border-left:1px solid #383838"></div>
<div class="b" style="left:1150px;top:390px;width:46px;height:27px;background:#444;border-right:1px solid #383838"></div>
<div class="a" style="left:1043px;top:397px;font-size:11px;letter-spacing:-.4px;line-height:14px;font-weight:bold;color:#f4f4f4">Layers</div>
<div class="a" style="left:1094px;top:397px;font-size:11px;letter-spacing:-.22px;line-height:14px;font-weight:bold;color:#b4b4b4">Channels</div>
<div class="a" style="left:1159px;top:397px;font-size:11px;letter-spacing:-.43px;line-height:14px;font-weight:bold;color:#b4b4b4">Paths</div>
<svg style="left:1257px;top:400px" width="10" height="8" shape-rendering="crispEdges"><rect x="0" y="0" width="10" height="1" fill="#c8c8c8"/><rect x="0" y="2" width="10" height="1" fill="#c8c8c8"/><rect x="0" y="4" width="10" height="1" fill="#c8c8c8"/><rect x="0" y="6" width="10" height="1" fill="#c8c8c8"/></svg>
<div class="b" style="left:1034px;top:450px;width:232px;height:1px;background:#484848"></div>
<div class="b" style="left:1034px;top:476px;width:232px;height:1px;background:#484848"></div>
<div class="b" style="left:1034px;top:503px;width:232px;height:1px;background:#484848"></div>
<div class="b" style="left:1038px;top:426px;width:90px;height:19px;background:#3a3a3a;border:1px solid #636363;border-radius:3px"></div>
<svg style="left:1045px;top:429px" width="13" height="13" viewBox="0 0 13 13"><circle cx="7.6" cy="5.2" r="3.6" stroke="#d8d8d8" stroke-width="1.3" fill="none"/><path d="M5 7.8L1.6 11.4" stroke="#d8d8d8" stroke-width="1.7"/></svg>
<div class="a" style="left:1059px;top:430px;font-size:11px;line-height:13px;color:#e8e8e8;font-size:10.6px">Kind</div>
<svg style="left:1115px;top:433px" width="9" height="6" viewBox="0 0 9 6"><path d="M1 1L4.5 4.4L8 1" fill="none" stroke="#cfcfcf" stroke-width="1.1"/></svg>
<svg style="left:1138px;top:429px" width="14" height="13" viewBox="0 0 14 13"><rect x="0.8" y="1.2" width="12" height="9.8" rx="1" stroke="#cfcfcf" stroke-width="1.1" fill="none"/><path d="M2.6 9.2L5 5.6L6.8 8L8.4 6.4L11 9.2Z" fill="#cfcfcf"/></svg>
<svg style="left:1162px;top:429px" width="13" height="13" viewBox="0 0 13 13"><circle cx="6.5" cy="6.5" r="5" stroke="#cfcfcf" stroke-width="1.1" fill="none"/><path d="M10 3A5 5 0 0 1 3 10Z" fill="#cfcfcf"/></svg>
<div class="a" style="left:1186px;top:426px;font-family:'Liberation Serif',serif;font-weight:bold;font-size:15px;line-height:18px;color:#d4d4d4">T</div>
<svg style="left:1210px;top:429px" width="14" height="13" viewBox="0 0 14 13"><rect x="2.2" y="2" width="9.4" height="9" stroke="#cfcfcf" stroke-width="1.1" fill="none"/><rect x="0.6" y="0.4" width="3" height="3" fill="#cfcfcf"/><rect x="10.2" y="0.4" width="3" height="3" fill="#cfcfcf"/><rect x="0.6" y="9.6" width="3" height="3" fill="#cfcfcf"/><rect x="10.2" y="9.6" width="3" height="3" fill="#cfcfcf"/></svg>
<svg style="left:1235px;top:429px" width="13" height="13" viewBox="0 0 13 13"><path d="M3.8 0.8H8.6L11.4 3.6V11.4H6.6V5.8H3.8Z" stroke="#cfcfcf" stroke-width="1.1" fill="none"/><rect x="1" y="6.2" width="5.4" height="6" fill="#cfcfcf"/></svg>
<div class="b" style="left:1260px;top:426px;width:12px;height:20px;border:1px solid #777;border-radius:4px;background:#3a3a3a"></div><div class="b" style="left:1261px;top:427px;width:9px;height:8px;border-radius:4px;background:#d8d8d8"></div>
<div class="b" style="left:1038px;top:454px;width:131px;height:18px;border:1px solid #626262;border-radius:3px;background:#4f4f4f"></div>
<div class="a" style="left:1045px;top:457px;font-size:11px;line-height:13px;color:#858585;font-size:10.7px">Normal</div>
<svg style="left:1155px;top:460px" width="9" height="6" viewBox="0 0 9 6"><path d="M1 1L4.5 4.4L8 1" fill="none" stroke="#7a7a7a" stroke-width="1.1"/></svg>
<div class="a" style="left:1173px;top:456px;font-size:11px;line-height:13px;color:#858585;">Opacity:</div>
<div class="a" style="left:1220px;top:456px;font-size:11px;line-height:13px;color:#757575;">100%</div>
<div class="b" style="left:1215px;top:471px;width:51px;height:1px;background:#5e5e5e"></div>
<svg style="left:1258px;top:460px" width="9" height="6" viewBox="0 0 9 6"><path d="M1 1L4.5 4.4L8 1" fill="none" stroke="#6e6e6e" stroke-width="1.1"/></svg>
<div class="a" style="left:1038px;top:483px;font-size:11px;line-height:13px;color:#d6d6d6;">Unify:</div>
<svg style="left:1069px;top:481px" width="18" height="17" viewBox="0 0 18 17"><path d="M7.8 1L12 5.2L10.8 5.8L8.6 8.6L8.4 10.4L5.6 7.6L2 11.4L1.6 11L5 7L2.2 4.2L4 4L6.8 1.8Z" fill="#d2d2d2"/><circle cx="10.2" cy="12.6" r="1.5" stroke="#cfcfcf" stroke-width="0.8" fill="none"/><circle cx="13.6" cy="12.6" r="1.5" stroke="#cfcfcf" stroke-width="0.8" fill="none"/></svg>
<svg style="left:1092px;top:481px" width="18" height="17" viewBox="0 0 18 17"><path d="M1 5.4C4-0.2 10-0.2 13 5.4C10 11 4 11 1 5.4Z" stroke="#d2d2d2" stroke-width="1.1" fill="none"/><circle cx="7" cy="5.2" r="2.4" fill="#d2d2d2"/><circle cx="9.8" cy="12.6" r="1.5" stroke="#cfcfcf" stroke-width="0.8" fill="none"/><circle cx="13.2" cy="12.6" r="1.5" stroke="#cfcfcf" stroke-width="0.8" fill="none"/></svg>
<div class="a" style="left:1115px;top:480px;font-family:'Liberation Serif',serif;font-style:italic;font-size:14px;line-height:16px;color:#d2d2d2">fx</div>
<svg style="left:1114px;top:481px" width="18" height="17" viewBox="0 0 18 17"><circle cx="9.8" cy="12.6" r="1.5" stroke="#cfcfcf" stroke-width="0.8" fill="none"/><circle cx="13.2" cy="12.6" r="1.5" stroke="#cfcfcf" stroke-width="0.8" fill="none"/></svg>
<div class="b" style="left:1160px;top:484px;width:10px;height:10px;background:#e6e6e6;border-radius:2px"></div>
<svg style="left:1160px;top:484px" width="10" height="10" viewBox="0 0 10 10"><path d="M2 5.2L4.2 7.4L8 2.6" stroke="#222" stroke-width="1.5" fill="none"/></svg>
<div class="a" style="left:1175px;top:483px;font-size:11px;line-height:13px;color:#ededed;">Propagate Frame 1</div>
<div class="a" style="left:1039px;top:510px;font-size:11px;line-height:13px;color:#858585;">Lock:</div>
<svg style="left:1070px;top:510px" width="14" height="14" shape-rendering="crispEdges"><rect x="1" y="1" width="12" height="12" fill="#6a6a6a"/><rect x="1" y="1" width="3" height="3" fill="#9a9a9a"/><rect x="1" y="7" width="3" height="3" fill="#9a9a9a"/><rect x="4" y="4" width="3" height="3" fill="#9a9a9a"/><rect x="4" y="10" width="3" height="3" fill="#9a9a9a"/><rect x="7" y="1" width="3" height="3" fill="#9a9a9a"/><rect x="7" y="7" width="3" height="3" fill="#9a9a9a"/><rect x="10" y="4" width="3" height="3" fill="#9a9a9a"/><rect x="10" y="10" width="3" height="3" fill="#9a9a9a"/></svg>
<svg style="left:1093px;top:509px" width="14" height="15" viewBox="0 0 14 15"><path d="M12.6 0.8L11.6 5L7.2 9.6L5.4 7.8Z" fill="#9a9a9a"/><path d="M4.8 8.6L6.6 10.4C6 12.6 3 13.8 0.6 14C2.4 12.4 2.2 9.4 4.8 8.6Z" fill="#9a9a9a"/></svg>
<svg style="left:1114px;top:510px" width="14" height="14" viewBox="-7 -7 14 14"><path d="M0-6.4L2.4-3.6H0.6V-0.6H3.6V-2.4L6.4 0L3.6 2.4V0.6H0.6V3.6H2.4L0 6.4L-2.4 3.6H-0.6V0.6H-3.6V2.4L-6.4 0L-3.6-2.4V-0.6H-0.6V-3.6H-2.4Z" fill="#9a9a9a"/></svg>
<svg style="left:1136px;top:509px" width="15" height="15" viewBox="0 0 15 15"><path d="M3.2 0.6V11.2H14.2M0.6 3.2H11.4V14.2" stroke="#9a9a9a" stroke-width="1.1" fill="none" stroke-dasharray="2.2 1"/><path d="M3.2 3.2H11.4V11.2H3.2Z" stroke="#9a9a9a" stroke-width="1.1" fill="none"/></svg>
<svg style="left:1159px;top:509px" width="12" height="15" viewBox="0 0 12 15"><rect x="1" y="6.2" width="10" height="8" rx="1" fill="#9a9a9a"/><path d="M3.2 6.4V4.2C3.2 0.6 8.8 0.6 8.8 4.2V6.4" stroke="#9a9a9a" stroke-width="1.4" fill="none"/><rect x="5.3" y="8.6" width="1.4" height="3" fill="#535353"/></svg>
<div class="a" style="left:1196px;top:510px;font-size:11px;line-height:13px;color:#858585;">Fill:</div>
<div class="a" style="left:1220px;top:510px;font-size:11px;line-height:13px;color:#757575;">100%</div>
<div class="b" style="left:1215px;top:525px;width:51px;height:1px;background:#5e5e5e"></div>
<svg style="left:1258px;top:514px" width="9" height="6" viewBox="0 0 9 6"><path d="M1 1L4.5 4.4L8 1" fill="none" stroke="#6e6e6e" stroke-width="1.1"/></svg>
<div class="b" style="left:1034px;top:530px;width:232px;height:187px;background:#464646"></div>
<div class="b" style="left:1034px;top:531px;width:224px;height:22px;background:#535353"></div>
<div class="b" style="left:1065px;top:531px;width:193px;height:22px;background:#6c6c6c"></div>
<div class="b" style="left:1064px;top:531px;width:1px;height:22px;background:#464646"></div>
<div class="b" style="left:1043px;top:536px;width:12px;height:12px;border:1px solid #626262;border-radius:1px;background:#505050"></div>
<div class="b" style="left:1066px;top:532px;width:36px;height:21px;background:#fff"></div>
<div class="b" style="left:1078px;top:532px;width:12px;height:21px;background:#6c6c6c"></div>
<div class="b" style="left:1066px;top:538px;width:36px;height:9px;background:#6c6c6c"></div>
<div class="b" style="left:1067px;top:533px;width:34px;height:19px;background:#6c6c6c"></div>
<div class="b" style="left:1068px;top:534px;width:32px;height:16px;background:#46ab8c;border:1px solid #2c2c2c"></div>
<svg style="left:1081px;top:537px" width="5" height="10" viewBox="0 0 5 10"><path d="M2 1V3M1.400 4.400L3.400 6.600L2.400 8.600" stroke="#a8dcc8" stroke-width="0.7" fill="none" opacity=".75"/></svg>
<div class="a" style="left:1108px;top:537px;font-size:11px;line-height:13px;color:#f2f2f2;font-size:11.5px">gif-1.png</div>
<div class="b" style="left:1034px;top:554px;width:224px;height:22px;background:#535353"></div>
<div class="b" style="left:1064px;top:554px;width:1px;height:22px;background:#464646"></div>
<div class="b" style="left:1043px;top:559px;width:12px;height:12px;border:1px solid #626262;border-radius:1px;background:#505050"></div>
<div class="b" style="left:1068px;top:557px;width:32px;height:16px;background:#46ab8c;border:1px solid #2c2c2c"></div>
<svg style="left:1081px;top:560px" width="5" height="10" viewBox="0 0 5 10"><path d="M2 1V3M1.400 4.400L3.400 6.600L2.400 8.600" stroke="#a8dcc8" stroke-width="0.7" fill="none" opacity=".75"/></svg>
<div class="a" style="left:1108px;top:560px;font-size:11px;line-height:13px;color:#e2e2e2;font-size:11.5px">gif-10.png</div>
<div class="b" style="left:1034px;top:577px;width:224px;height:22px;background:#535353"></div>
<div class="b" style="left:1064px;top:577px;width:1px;height:22px;background:#464646"></div>
<div class="b" style="left:1043px;top:582px;width:12px;height:12px;border:1px solid #626262;border-radius:1px;background:#505050"></div>
<div class="b" style="left:1068px;top:580px;width:32px;height:16px;background:#46ab8c;border:1px solid #2c2c2c"></div>
<svg style="left:1081px;top:583px" width="5" height="10" viewBox="0 0 5 10"><path d="M2 1V3M1.400 4.400L3.400 6.600L2.400 8.600" stroke="#a8dcc8" stroke-width="0.7" fill="none" opacity=".75"/></svg>
<div class="a" style="left:1108px;top:583px;font-size:11px;line-height:13px;color:#e2e2e2;font-size:11.5px">gif-11.png</div>
<div class="b" style="left:1034px;top:600px;width:224px;height:22px;background:#535353"></div>
<div class="b" style="left:1064px;top:600px;width:1px;height:22px;background:#464646"></div>
<div class="b" style="left:1043px;top:605px;width:12px;height:12px;border:1px solid #626262;border-radius:1px;background:#505050"></div>
<div class="b" style="left:1068px;top:603px;width:32px;height:16px;background:#46ab8c;border:1px solid #2c2c2c"></div>
<svg style="left:1081px;top:606px" width="5" height="10" viewBox="0 0 5 10"><path d="M2 1V3M1.400 4.400L3.400 6.600L2.400 8.600" stroke="#a8dcc8" stroke-width="0.7" fill="none" opacity=".75"/></svg>
<div class="a" style="left:1108px;top:606px;font-size:11px;line-height:13px;color:#e2e2e2;font-size:11.5px">gif-12.png</div>
<div class="b" style="left:1034px;top:623px;width:224px;height:22px;background:#535353"></div>
<div class="b" style="left:1064px;top:623px;width:1px;height:22px;background:#464646"></div>
<div class="b" style="left:1043px;top:628px;width:12px;height:12px;border:1px solid #626262;border-radius:1px;background:#505050"></div>
<div class="b" style="left:1068px;top:626px;width:32px;height:16px;background:#46ab8c;border:1px solid #2c2c2c"></div>
<svg style="left:1081px;top:629px" width="5" height="10" viewBox="0 0 5 10"><path d="M2 1V3M1.400 4.400L3.400 6.600L2.400 8.600" stroke="#a8dcc8" stroke-width="0.7" fill="none" opacity=".75"/></svg>
<div class="a" style="left:1108px;top:629px;font-size:11px;line-height:13px;color:#e2e2e2;font-size:11.5px">gif-13.png</div>
<div class="b" style="left:1034px;top:646px;width:224px;height:22px;background:#535353"></div>
<div class="b" style="left:1064px;top:646px;width:1px;height:22px;background:#464646"></div>
<div class="b" style="left:1043px;top:651px;width:12px;height:12px;border:1px solid #626262;border-radius:1px;background:#505050"></div>
<div class="b" style="left:1068px;top:649px;width:32px;height:16px;background:#46ab8c;border:1px solid #2c2c2c"></div>
<svg style="left:1081px;top:652px" width="5" height="10" viewBox="0 0 5 10"><path d="M2 1V3M1.400 4.400L3.400 6.600L2.400 8.600" stroke="#a8dcc8" stroke-width="0.7" fill="none" opacity=".75"/></svg>
<div class="a" style="left:1108px;top:652px;font-size:11px;line-height:13px;color:#e2e2e2;font-size:11.5px">gif-14.png</div>
<div class="b" style="left:1034px;top:669px;width:224px;height:22px;background:#535353"></div>
<div class="b" style="left:1064px;top:669px;width:1px;height:22px;background:#464646"></div>
<div class="b" style="left:1043px;top:674px;width:12px;height:12px;border:1px solid #626262;border-radius:1px;background:#505050"></div>
<div class="b" style="left:1068px;top:672px;width:32px;height:16px;background:#46ab8c;border:1px solid #2c2c2c"></div>
<svg style="left:1081px;top:675px" width="5" height="10" viewBox="0 0 5 10"><path d="M2 1V3M1.400 4.400L3.400 6.600L2.400 8.600" stroke="#a8dcc8" stroke-width="0.7" fill="none" opacity=".75"/></svg>
<div class="a" style="left:1108px;top:675px;font-size:11px;line-height:13px;color:#e2e2e2;font-size:11.5px">gif-15.png</div>
<div class="b" style="left:1034px;top:692px;width:224px;height:22px;background:#535353"></div>
<div class="b" style="left:1064px;top:692px;width:1px;height:22px;background:#464646"></div>
<div class="b" style="left:1043px;top:697px;width:12px;height:12px;border:1px solid #626262;border-radius:1px;background:#505050"></div>
<div class="b" style="left:1068px;top:695px;width:32px;height:16px;background:#46ab8c;border:1px solid #2c2c2c"></div>
<svg style="left:1081px;top:698px" width="5" height="10" viewBox="0 0 5 10"><path d="M2 1V3M1.400 4.400L3.400 6.600L2.400 8.600" stroke="#a8dcc8" stroke-width="0.7" fill="none" opacity=".75"/></svg>
<div class="a" style="left:1108px;top:698px;font-size:11px;line-height:13px;color:#e2e2e2;font-size:11.5px">gif-16.png</div>
<div class="b" style="left:1258px;top:530px;width:8px;height:187px;background:#484848;border-left:1px solid #3c3c3c"></div>
<div class="b" style="left:1261px;top:533px;width:8px;height:66px;background:#626262;border-radius:4px"></div>
<div class="b" style="left:1034px;top:717px;width:232px;height:18px;background:#535353;border-top:1px solid #444"></div>
<svg style="left:1069px;top:722px" width="16" height="12" viewBox="0 0 16 12"><rect x="1" y="3.4" width="7.6" height="5.2" rx="2.6" stroke="#8c8c8c" stroke-width="1.2" fill="none"/><rect x="7.4" y="3.4" width="7.6" height="5.2" rx="2.6" stroke="#8c8c8c" stroke-width="1.2" fill="none"/></svg>
<div class="a" style="left:1098px;top:719px;font-family:'Liberation Sans',sans-serif;font-style:italic;font-size:14px;line-height:16px;color:#b4b4b4">fx</div>
<svg style="left:1124px;top:722px" width="14" height="12" viewBox="0 0 14 12"><rect x="0.6" y="0.8" width="12.8" height="10.4" rx="1" fill="#b4b4b4"/><circle cx="7" cy="6" r="3" fill="#535353"/></svg>
<svg style="left:1152px;top:722px" width="13" height="13" viewBox="0 0 13 13"><circle cx="6.5" cy="6.5" r="5" stroke="#b4b4b4" stroke-width="1.1" fill="none"/><path d="M10 3A5 5 0 0 1 3 10Z" fill="#b4b4b4"/></svg>
<svg style="left:1178px;top:722px" width="14" height="12" viewBox="0 0 14 12"><path d="M0.6 1.4H5.4L6.8 3H13.4V11.2H0.6Z" fill="#b4b4b4"/></svg>
<svg style="left:1205px;top:722px" width="13" height="13" viewBox="0 0 13 13"><path d="M1.2 1H11.8V12H4.4L1.2 8.8Z" stroke="#b4b4b4" stroke-width="1.2" fill="none"/><path d="M1.2 8.8H4.4V12Z" fill="#b4b4b4"/></svg>
<svg style="left:1233px;top:721px" width="12" height="14" viewBox="0 0 12 14"><path d="M1.6 3.6H10.4L9.6 13.2H2.4Z" fill="#b4b4b4"/><path d="M0.6 2.4H11.4M4 2.2V0.8H8V2.2" stroke="#b4b4b4" stroke-width="1.1" fill="none"/><path d="M4.2 5.4V11.4M6 5.4V11.4M7.8 5.4V11.4" stroke="#535353" stroke-width="0.7"/></svg>
</body></html>
